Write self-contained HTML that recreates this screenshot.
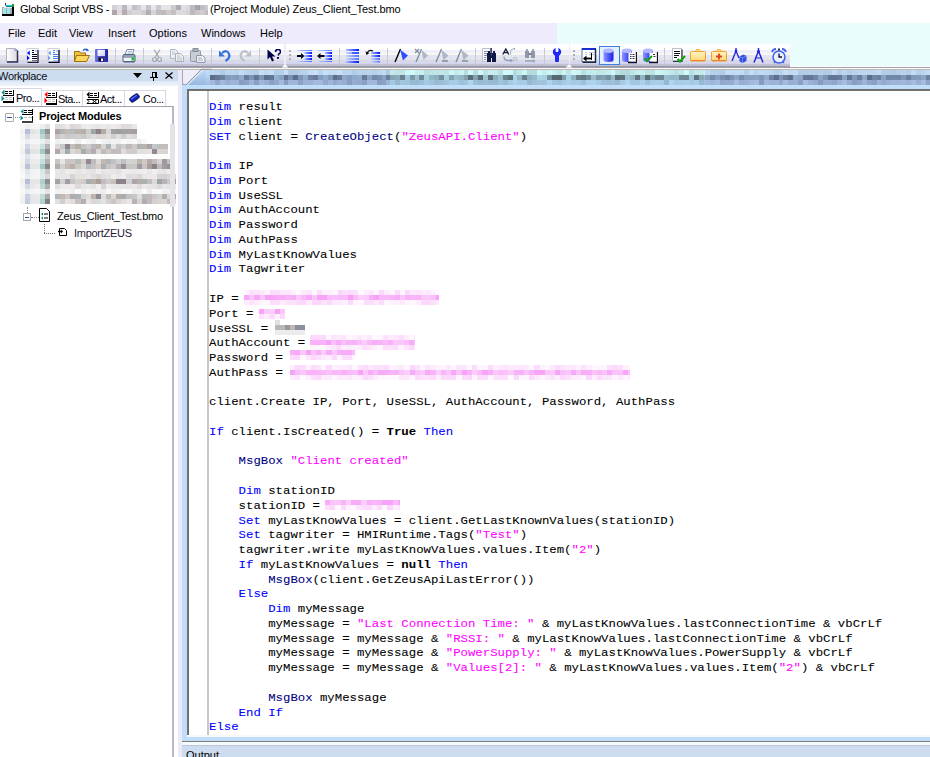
<!DOCTYPE html>
<html><head><meta charset="utf-8">
<style>
*{margin:0;padding:0;box-sizing:border-box}
html,body{width:930px;height:757px;overflow:hidden;background:#fff}
body{position:relative;font-family:"Liberation Sans",sans-serif;font-size:11px;color:#000}
.a{position:absolute}
.t{position:absolute;white-space:pre;line-height:11px;font-size:11px}
.cl{position:absolute;left:209px;white-space:pre;font-family:"Liberation Mono",monospace;font-size:12.33px;line-height:14px;color:#000;transform:scaleY(0.88);transform-origin:0 10.3px;-webkit-text-stroke:0.08px currentColor}
.k{color:#0000ff}.n{color:#000080}.s{color:#ff00ff}.b{font-weight:bold}
.sep{position:absolute;top:48px;width:1px;height:16px;background:#c8c8d4}
</style></head><body>
<!-- title bar -->
<svg class="a" style="left:2px;top:2px" width="13" height="14" shape-rendering="crispEdges"><rect x="0" y="5" width="10" height="8" fill="#b0a8a8"/><rect x="1" y="6" width="3" height="7" fill="#98e8ec"/><rect x="5" y="6" width="3" height="7" fill="#98e8ec"/><rect x="10" y="5" width="2" height="9" fill="#000"/><rect x="0" y="12" width="12" height="2" fill="#000"/><rect x="3" y="1" width="1" height="2" fill="#303030"/><rect x="3" y="3" width="8" height="1" fill="#20c8d8"/><rect x="4" y="4" width="6" height="1" fill="#108088"/><rect x="10" y="2" width="2" height="3" fill="#10a020"/><rect x="2" y="5" width="8" height="1" fill="#f0e8e8"/></svg>
<div class="t" style="left:20px;top:4px;letter-spacing:-0.3px">Global Script VBS -</div>
<svg class="a" style="left:112px;top:5px" width="96" height="14" shape-rendering="crispEdges"><rect x="0.0" y="0" width="5.4" height="5" fill="#d3d1d7"/><rect x="4.9" y="0" width="5.4" height="5" fill="#e0dee2"/><rect x="9.8" y="0" width="5.4" height="5" fill="#bab9c1"/><rect x="14.7" y="0" width="5.4" height="5" fill="#e6e4e7"/><rect x="19.6" y="0" width="5.4" height="5" fill="#c2c1c9"/><rect x="24.5" y="0" width="5.4" height="5" fill="#cfced4"/><rect x="29.4" y="0" width="5.4" height="5" fill="#e7e5e8"/><rect x="34.3" y="0" width="5.4" height="5" fill="#c5c3cb"/><rect x="39.2" y="0" width="5.4" height="5" fill="#e9e7e9"/><rect x="44.1" y="0" width="5.4" height="5" fill="#cac9cf"/><rect x="49.0" y="0" width="5.4" height="5" fill="#e6e4e7"/><rect x="53.9" y="0" width="5.4" height="5" fill="#e5e3e6"/><rect x="58.8" y="0" width="5.4" height="5" fill="#cbcad0"/><rect x="63.7" y="0" width="5.4" height="5" fill="#acabb6"/><rect x="68.6" y="0" width="5.4" height="5" fill="#e2e0e3"/><rect x="73.5" y="0" width="5.4" height="5" fill="#dad9dd"/><rect x="78.4" y="0" width="5.4" height="5" fill="#bbbac3"/><rect x="83.3" y="0" width="5.4" height="5" fill="#a3a2ae"/><rect x="88.2" y="0" width="5.4" height="5" fill="#bfbec6"/><rect x="93.1" y="0" width="5.4" height="5" fill="#cdccd2"/><rect x="0.0" y="5" width="5.4" height="5" fill="#aea5aa"/><rect x="4.9" y="5" width="5.4" height="5" fill="#dfdbdd"/><rect x="9.8" y="5" width="5.4" height="5" fill="#b4acb0"/><rect x="14.7" y="5" width="5.4" height="5" fill="#d2cdcf"/><rect x="19.6" y="5" width="5.4" height="5" fill="#dad5d8"/><rect x="24.5" y="5" width="5.4" height="5" fill="#dbd7d9"/><rect x="29.4" y="5" width="5.4" height="5" fill="#d1ccce"/><rect x="34.3" y="5" width="5.4" height="5" fill="#b6afb2"/><rect x="39.2" y="5" width="5.4" height="5" fill="#d8d3d6"/><rect x="44.1" y="5" width="5.4" height="5" fill="#c3bcbf"/><rect x="49.0" y="5" width="5.4" height="5" fill="#c0b9bc"/><rect x="53.9" y="5" width="5.4" height="5" fill="#cec8cb"/><rect x="58.8" y="5" width="5.4" height="5" fill="#c4bec1"/><rect x="63.7" y="5" width="5.4" height="5" fill="#dedadc"/><rect x="68.6" y="5" width="5.4" height="5" fill="#dedadc"/><rect x="73.5" y="5" width="5.4" height="5" fill="#d7d2d4"/><rect x="78.4" y="5" width="5.4" height="5" fill="#bdb6ba"/><rect x="83.3" y="5" width="5.4" height="5" fill="#cbc5c8"/><rect x="88.2" y="5" width="5.4" height="5" fill="#d1cbce"/><rect x="93.1" y="5" width="5.4" height="5" fill="#c2bcbf"/></svg>
<div class="t" style="left:210px;top:4px;letter-spacing:-0.07px">(Project Module) Zeus_Client_Test.bmo</div>
<!-- menu bar -->
<div class="a" style="left:0;top:23px;width:557px;height:21px;background:#eeecfc"></div>
<div class="a" style="left:557px;top:23px;width:373px;height:21px;background:#eafcfc"></div>
<div class="t" style="left:8px;top:28px">File</div>
<div class="t" style="left:38px;top:28px">Edit</div>
<div class="t" style="left:69px;top:28px">View</div>
<div class="t" style="left:108px;top:28px">Insert</div>
<div class="t" style="left:149px;top:28px">Options</div>
<div class="t" style="left:201px;top:28px">Windows</div>
<div class="t" style="left:260px;top:28px">Help</div>
<!-- toolbar row -->
<div class="a" style="left:0;top:44px;width:930px;height:22px;background:#eafcfc"></div>
<div class="a" style="left:0;top:44px;width:570px;height:22px;background:#eeecfc"></div>
<div class="a" style="left:0;top:44px;width:284px;height:22px;background:linear-gradient(#fff 0,#fff 6px,#f0f0fa 6px,#f0f0fa 9.5px,#f8f8f0 9.5px,#f8f8f0 11px,#e4e4f0 11px,#e4e4f0 14.6px,#dde4e4 14.6px,#dde4e4 16px,#d8d8e8 16px,#d8d8e8 19.3px,#d0d4f0 19.3px,#d0d4f0 20.4px,#c0c0d0 20.4px)"></div>
<div class="a" style="left:286px;top:44px;width:283px;height:22px;background:linear-gradient(#fff 0,#fff 6px,#f0f0fa 6px,#f0f0fa 9.5px,#f8f8f0 9.5px,#f8f8f0 11px,#e4e4f0 11px,#e4e4f0 14.6px,#dde4e4 14.6px,#dde4e4 16px,#d8d8e8 16px,#d8d8e8 19.3px,#d0d4f0 19.3px,#d0d4f0 20.4px,#c0c0d0 20.4px)"></div>
<div class="a" style="left:570px;top:44px;width:220px;height:22px;background:linear-gradient(#fff 0,#fff 6px,#f0f0fa 6px,#f0f0fa 9.5px,#f8f8f0 9.5px,#f8f8f0 11px,#e4e4f0 11px,#e4e4f0 14.6px,#dde4e4 14.6px,#dde4e4 16px,#d8d8e8 16px,#d8d8e8 19.3px,#d0d4f0 19.3px,#d0d4f0 20.4px,#c0c0d0 20.4px)"></div>
<div class="a" style="left:0;top:66px;width:790px;height:1px;background:#9898a8"></div>
<div class="a" style="left:790px;top:66px;width:140px;height:1px;background:#fafefe"></div>
<div class="a" style="left:0;top:67px;width:930px;height:1px;background:#a4a2a8"></div>
<div class="a" style="left:0;top:68px;width:930px;height:1px;background:#f8fafc"></div>
<div class="a" style="left:0;top:69px;width:930px;height:1px;background:#c0b8b4"></div>
<div class="sep" style="left:67px"></div>
<div class="sep" style="left:115px"></div>
<div class="sep" style="left:143px"></div>
<div class="sep" style="left:211px"></div>
<div class="sep" style="left:259px"></div>
<div class="sep" style="left:339px"></div>
<div class="sep" style="left:387px"></div>
<div class="sep" style="left:475px"></div>
<div class="sep" style="left:544px"></div>
<div class="sep" style="left:664px"></div>
<svg class="a" style="left:6px;top:48px" width="13" height="15" viewBox="0 0 13 15"><defs><linearGradient id="pg" x1="0" x2="1"><stop offset="0" stop-color="#fff"/><stop offset="1" stop-color="#d8d8e0"/></linearGradient></defs><path d="M0.5 0.5h9l2 2v11h-11z" fill="url(#pg)" stroke="#b0b0c0"/><path d="M11.5 2.5v11.5H1" stroke="#303050" stroke-width="1.5" fill="none"/><path d="M8 2h3" stroke="#5080e0" stroke-width="1"/></svg>
<svg class="a" style="left:26px;top:48px" width="13" height="15" viewBox="0 0 13 15"><rect x="1" y="0.5" width="11" height="13" fill="#fff" stroke="#d0d0d8"/><path d="M12 2v12.5H1.5" stroke="#202040" stroke-width="1.3" fill="none"/><path d="M1 5l2.8-2.5v5zM3.8 10L1 7.5v5z" fill="#0010ff"/><path d="M6 2.5h2M6 4.5h2M6 6.5h5M6 8.5h5M6 10.5h5" stroke="#000020"/><path d="M6 12.5h5" stroke="#707080"/><path d="M9 3h2" stroke="#70a0f0"/></svg>
<svg class="a" style="left:47px;top:48px" width="13" height="15" viewBox="0 0 13 15"><rect x="1" y="0.5" width="11" height="13" fill="#fffef8" stroke="#d0d0d8"/><path d="M12 2v12.5H1.5" stroke="#000020" stroke-width="1.3" fill="none"/><path d="M1 5l2.8-2.5v5zM3.8 10L1 7.5v5z" fill="#70a0ff"/><path d="M6 2.5h2M6 4.5h2M6 6.5h5M6 8.5h5M6 10.5h5" stroke="#4080f0"/><path d="M6 12.5h5" stroke="#a0c0ff"/><path d="M9 3h2" stroke="#70a0f0"/></svg>
<svg class="a" style="left:74px;top:48px" width="16" height="15" viewBox="0 0 16 15"><path d="M0.5 3.5h5l1 1.5h5v8h-11z" fill="#f0c040" stroke="#a07010"/><path d="M2.5 7.5h13l-3 6h-12z" fill="#ffd860" stroke="#a07010"/><path d="M9 2.5q2.5-2.5 5 0" stroke="#3060c0" stroke-width="1.3" fill="none"/><path d="M13 0.5l2 2.5h-3z" fill="#3060c0"/></svg>
<svg class="a" style="left:95px;top:49px" width="14" height="13" viewBox="0 0 14 13"><defs><linearGradient id="flg" x1="0" x2="1"><stop offset="0" stop-color="#7070e8"/><stop offset="1" stop-color="#2020a0"/></linearGradient><linearGradient id="flw" x1="0" y1="0" x2="1" y2="1"><stop offset="0" stop-color="#ffffff"/><stop offset="1" stop-color="#c8d0f0"/></linearGradient></defs><rect x="0" y="0" width="13" height="13" rx="0.8" fill="url(#flg)"/><rect x="2.5" y="0.8" width="7.5" height="6.2" fill="url(#flw)"/><rect x="3.5" y="8.5" width="5" height="3.8" fill="#101018"/><rect x="6" y="9.5" width="2" height="2.5" fill="#f0f0f0"/></svg>
<svg class="a" style="left:122px;top:49px" width="14" height="14" viewBox="0 0 14 14"><path d="M3 5.5L5 0.5h7l-1.5 5z" fill="#f4f8ff" stroke="#6880a0" stroke-width="0.9"/><path d="M6 2.5h4M5.5 4h4" stroke="#a0b0c8" stroke-width="0.8"/><rect x="0.5" y="5" width="13" height="8.5" rx="2" fill="#506478"/><rect x="1.5" y="8.5" width="11" height="3.5" fill="#f0f4fc"/><rect x="9.5" y="8.5" width="3" height="3" fill="#20c030"/><rect x="1.5" y="6" width="11" height="2" fill="#90a4b8"/></svg>
<svg class="a" style="left:152px;top:49px" width="10" height="13" viewBox="0 0 10 13"><path d="M2 0.5l5 8M8 0.5l-5 8" stroke="#a0a8b0" stroke-width="1.3"/><circle cx="2.5" cy="10.5" r="2" fill="none" stroke="#a0a8b0" stroke-width="1.2"/><circle cx="7.5" cy="10.5" r="2" fill="none" stroke="#a0a8b0" stroke-width="1.2"/></svg>
<svg class="a" style="left:170px;top:49px" width="14" height="13" viewBox="0 0 14 13"><path d="M0.5 0.5h5l2 2v7h-7z" fill="#eef0f4" stroke="#b0b8c0"/><path d="M5.5 4.5h5l3 3v5h-8z" fill="#eef0f4" stroke="#a8b0b8"/><path d="M7 7h3M7 9h5M7 11h5M2 3h3M2 5h3" stroke="#b8c0c8"/></svg>
<svg class="a" style="left:190px;top:48px" width="16" height="15" viewBox="0 0 16 15"><rect x="0.5" y="2.5" width="10" height="11" rx="1" fill="#c8ccd4" stroke="#9098a8"/><rect x="3" y="0.5" width="5" height="3" fill="#a8b0b8" stroke="#8890a0"/><path d="M6.5 7.5h6l2.5 2.5v4.5h-8.5z" fill="#eef0f4" stroke="#9098a8"/><path d="M8 10h4M8 12h5" stroke="#a8b0b8"/></svg>
<svg class="a" style="left:219px;top:49px" width="12" height="13" viewBox="0 0 12 13"><path d="M3 4q5-4 7 1q1.5 4-3.5 7" stroke="#3070e0" stroke-width="2.2" fill="none"/><path d="M0 1.5v6h6z" fill="#3070e0"/></svg>
<svg class="a" style="left:239px;top:49px" width="12" height="13" viewBox="0 0 12 13"><path d="M9 4q-5-4-7 1q-1.5 4 3.5 7" stroke="#b8c0c8" stroke-width="2.2" fill="none"/><path d="M12 1.5v6h-6z" fill="#b8c0c8"/></svg>
<svg class="a" style="left:267px;top:49px" width="14" height="13" viewBox="0 0 14 13"><path d="M0.5 0.5v10l2.5-2.5 2 4.5 2-1-2-4h3.5z" fill="#000048"/><path d="M8.5 3q0-2.5 2.5-2.5t2.5 2.2q0 1.5-2 2.5v1.3" stroke="#000060" stroke-width="1.6" fill="none"/><rect x="10" y="8" width="2" height="1.8" fill="#000060"/></svg>
<svg class="a" style="left:289px;top:49px" width="3" height="12" viewBox="0 0 3 12"><rect x="0" y="1" width="2" height="2" fill="#b0b0bc"/><rect x="0" y="5" width="2" height="2" fill="#b0b0bc"/><rect x="0" y="9" width="2" height="2" fill="#b0b0bc"/></svg>
<svg class="a" style="left:297px;top:48px" width="16" height="15" viewBox="0 0 16 15"><defs><linearGradient id="bl" x1="0" x2="1"><stop offset="0" stop-color="#a8c0ff"/><stop offset="1" stop-color="#0010ff"/></linearGradient><linearGradient id="bll" x1="0" x2="1"><stop offset="0" stop-color="#c8d8ff"/><stop offset="1" stop-color="#5070ff"/></linearGradient></defs><rect x="0" y="2" width="15" height="1" fill="url(#bll)"/><rect x="7.5" y="4" width="7.5" height="2" fill="url(#bl)"/><rect x="7.5" y="7" width="7.5" height="2" fill="url(#bl)"/><rect x="7.5" y="10" width="7.5" height="2" fill="url(#bl)"/><rect x="0" y="13" width="15" height="1" fill="url(#bll)"/><path d="M0 8h4.5" stroke="#000018" stroke-width="2"/><path d="M4 5l3.5 3-3.5 3z" fill="#000018"/></svg>
<svg class="a" style="left:317px;top:48px" width="16" height="15" viewBox="0 0 16 15"><defs><linearGradient id="bl2" x1="0" x2="1"><stop offset="0" stop-color="#a8c0ff"/><stop offset="1" stop-color="#0010ff"/></linearGradient><linearGradient id="bll2" x1="0" x2="1"><stop offset="0" stop-color="#c8d8ff"/><stop offset="1" stop-color="#5070ff"/></linearGradient></defs><rect x="0" y="2" width="15" height="1" fill="url(#bll2)"/><rect x="8" y="4" width="7" height="2" fill="url(#bl2)"/><rect x="8" y="7" width="7" height="2" fill="url(#bl2)"/><rect x="8" y="10" width="7" height="2" fill="url(#bl2)"/><rect x="0" y="13" width="15" height="1" fill="url(#bll2)"/><path d="M3 8h4.5" stroke="#000018" stroke-width="2"/><path d="M3.5 5L0 8l3.5 3z" fill="#000018"/></svg>
<svg class="a" style="left:346px;top:48px" width="14" height="15" viewBox="0 0 14 15"><defs><linearGradient id="bl3" x1="0" x2="1"><stop offset="0" stop-color="#a8c0ff"/><stop offset="1" stop-color="#0010ff"/></linearGradient><linearGradient id="bll3" x1="0" x2="1"><stop offset="0" stop-color="#c8d8ff"/><stop offset="1" stop-color="#5070ff"/></linearGradient></defs><rect x="0" y="1" width="13" height="2" fill="url(#bl3)"/><rect x="0" y="4" width="13" height="2" fill="url(#bll3)"/><rect x="0" y="7" width="13" height="2" fill="url(#bll3)"/><rect x="0" y="10" width="13" height="2" fill="url(#bll3)"/><rect x="0" y="13" width="13" height="2" fill="url(#bl3)"/><rect x="6" y="4" width="7" height="2" fill="#2040ff" opacity="0.6"/></svg>
<svg class="a" style="left:365px;top:48px" width="16" height="15" viewBox="0 0 16 15"><defs><linearGradient id="bl4" x1="0" x2="1"><stop offset="0" stop-color="#a8c0ff"/><stop offset="1" stop-color="#0010ff"/></linearGradient><linearGradient id="bll4" x1="0" x2="1"><stop offset="0" stop-color="#c8d8ff"/><stop offset="1" stop-color="#5070ff"/></linearGradient></defs><path d="M2 5q2-4 6-2" stroke="#000" stroke-width="1.1" fill="none"/><path d="M0.5 3.5l1 3.5 3-2z" fill="#000"/><rect x="6" y="4" width="9" height="2" fill="url(#bl4)"/><rect x="6" y="7" width="9" height="2" fill="url(#bl4)"/><rect x="6" y="10" width="9" height="2" fill="url(#bll4)"/><rect x="6" y="13" width="9" height="1.5" fill="url(#bll4)"/></svg>
<svg class="a" style="left:394px;top:48px" width="15" height="15" viewBox="0 0 15 15"><path d="M1 14L6.5 1" stroke="#000" stroke-width="1.4"/><path d="M6 1.5l8 6-5 5z" fill="#3050ff"/></svg>
<svg class="a" style="left:414px;top:48px" width="15" height="15" viewBox="0 0 15 15"><path d="M2 14L7.5 1" stroke="#8090a0" stroke-width="1.4"/><path d="M7 1.5l7 6-4.5 4.5z" fill="#b0b8c8"/><path d="M1 1l4 4M5 1L1 5" stroke="#8090a0" stroke-width="1.3"/></svg>
<svg class="a" style="left:435px;top:48px" width="15" height="15" viewBox="0 0 15 15"><path d="M1 14L6.5 1" stroke="#8090a0" stroke-width="1.4"/><path d="M6 1.5l7.5 6-5 5z" fill="#b0b8c8"/><path d="M7 13h6" stroke="#8090a0" stroke-width="1.5"/></svg>
<svg class="a" style="left:455px;top:48px" width="15" height="15" viewBox="0 0 15 15"><path d="M1 14L6.5 1" stroke="#8090a0" stroke-width="1.4"/><path d="M6 1.5l7.5 6-5 5z" fill="#b0b8c8"/><path d="M7 13h6" stroke="#8090a0" stroke-width="1.5"/></svg>
<svg class="a" style="left:482px;top:48px" width="15" height="14" viewBox="0 0 15 14"><rect x="0.5" y="0.5" width="8" height="13" fill="#f8f8fc" stroke="#c0c0c8"/><path d="M2 3.5h4M2 5.5h3M2 7.5h3M2 9.5h2M2 11.5h2" stroke="#8090a0"/><rect x="5" y="5" width="4" height="9" fill="#101848"/><rect x="10" y="5" width="4" height="9" fill="#101848"/><rect x="6" y="3" width="2" height="2" fill="#101848"/><rect x="11" y="3" width="2" height="2" fill="#101848"/><rect x="8.5" y="0" width="1.3" height="8" fill="#101848"/><rect x="9" y="8" width="1" height="2" fill="#101848"/></svg>
<svg class="a" style="left:502px;top:48px" width="16" height="15" viewBox="0 0 16 15"><path d="M0.8 6.5L3.8 1l3 5.5M1.8 4.6h4" stroke="#101838" stroke-width="1.3" fill="none"/><path d="M8.5 6.5v-3q0-2 3-2.5" stroke="#a8b8c8" stroke-width="1.1" fill="none"/><path d="M11 0h2v2z" fill="#8898b0"/><path d="M2 8.5q0 4 4 4h3" stroke="#90a0b8" stroke-width="1.4" fill="none"/><path d="M8.5 10.5l2.5 2-2.5 2z" fill="#90a0b8"/><path d="M11.5 14V9.5h2.5q1.3 0 1.3 1.2t-1.3 1.3h-2.5M13.5 12l2 2" stroke="#b8c0d0" stroke-width="0.9" fill="none"/></svg>
<svg class="a" style="left:524px;top:48px" width="12" height="15" viewBox="0 0 12 15"><rect x="1" y="3" width="4" height="7" fill="#9098a8"/><rect x="7" y="3" width="4" height="7" fill="#9098a8"/><rect x="2" y="1" width="2" height="2" fill="#a0a8b4"/><rect x="8" y="1" width="2" height="2" fill="#a0a8b4"/><rect x="4" y="5" width="4" height="2" fill="#808898"/><path d="M1 13h8" stroke="#98a4b4" stroke-width="1.5"/><path d="M9 11l2.5 2-2.5 2z" fill="#98a4b4"/></svg>
<svg class="a" style="left:552px;top:48px" width="10" height="15" viewBox="0 0 10 15"><circle cx="5" cy="4" r="4.2" fill="#2028f8"/><path d="M3.6 0h2.8v3.6q-1.4 1-2.8 0z" fill="#f4f4fc"/><rect x="3" y="6.5" width="4" height="7.5" rx="1" fill="#2028f8"/></svg>
<svg class="a" style="left:573px;top:49px" width="3" height="12" viewBox="0 0 3 12"><rect x="0" y="1" width="2" height="2" fill="#b0b0bc"/><rect x="0" y="5" width="2" height="2" fill="#b0b0bc"/><rect x="0" y="9" width="2" height="2" fill="#b0b0bc"/></svg>
<svg class="a" style="left:581px;top:48px" width="16" height="15" viewBox="0 0 16 15"><rect x="1" y="0.5" width="13.5" height="13" fill="#fff" stroke="#6878a0"/><rect x="1" y="0" width="14" height="2" fill="#1830d0"/><path d="M14.5 1v13.5H1.5" stroke="#202840" stroke-width="1.5" fill="none"/><path d="M4 4.5h2M4 6.5h2M8 4.5h5M8 6.5h5" stroke="#c0c8d8"/><path d="M3 10.5h7" stroke="#000" stroke-width="1.8"/><path d="M5.5 7.5L2 10.5l3.5 3z" fill="#000"/><path d="M10.5 5v7" stroke="#000" stroke-width="1"/></svg>
<div class="a" style="left:599px;top:46px;width:21px;height:19px;border:1.5px solid #3c80e0;background:#e4eefc"></div>
<svg class="a" style="left:603px;top:48px" width="12" height="16" viewBox="0 0 12 16"><defs><linearGradient id="dbg1" x1="0" x2="1"><stop offset="0" stop-color="#9098ff"/><stop offset="0.5" stop-color="#5058f8"/><stop offset="1" stop-color="#1820e8"/></linearGradient></defs><path d="M0.5 2.8v9a5 2.2 0 0 0 10 0v-9z" fill="url(#dbg1)"/><ellipse cx="5.5" cy="2.8" rx="5" ry="2.2" fill="#b0b8ff"/></svg>
<svg class="a" style="left:621px;top:48px" width="16" height="16" viewBox="0 0 16 16"><defs><linearGradient id="dbg2" x1="0" x2="1"><stop offset="0" stop-color="#9098ff"/><stop offset="0.5" stop-color="#5058f8"/><stop offset="1" stop-color="#1820e8"/></linearGradient></defs><path d="M1.0 2.8v9a5 2.2 0 0 0 10 0v-9z" fill="url(#dbg2)"/><ellipse cx="6.0" cy="2.8" rx="5" ry="2.2" fill="#b0b8ff"/><rect x="7.5" y="4.5" width="7.5" height="9" fill="#fff"/><path d="M15.5 4v10.5H7" stroke="#101020" stroke-width="1.3" fill="none"/><path d="M9 6.5h1.5M11.5 6.5h2M9 8.5h1.5M11.5 8.5h2M9 10.5h1.5M11.5 10.5h2" stroke="#303040"/></svg>
<svg class="a" style="left:642px;top:48px" width="16" height="16" viewBox="0 0 16 16"><defs><linearGradient id="dbg3" x1="0" x2="1"><stop offset="0" stop-color="#9098ff"/><stop offset="0.5" stop-color="#5058f8"/><stop offset="1" stop-color="#1820e8"/></linearGradient></defs><path d="M1.0 2.8v9a5 2.2 0 0 0 10 0v-9z" fill="url(#dbg3)"/><ellipse cx="6.0" cy="2.8" rx="5" ry="2.2" fill="#b0b8ff"/><rect x="7.5" y="4.5" width="7.5" height="9" fill="#fff"/><path d="M15.5 4v10.5H7" stroke="#101020" stroke-width="1.3" fill="none"/><path d="M11 6.5h2M11.5 8.5h2" stroke="#303040"/><path d="M2.5 10.5l2.5 2.5 5-5" stroke="#18a018" stroke-width="2" fill="none"/></svg>
<svg class="a" style="left:672px;top:48px" width="14" height="15" viewBox="0 0 14 15"><rect x="0.5" y="0.5" width="9" height="12" fill="#fff" stroke="#c0c0c8"/><path d="M10 1.5v12H1" stroke="#303048" stroke-width="1.2" fill="none"/><path d="M2 3.5h6M2 5.5h6M2 7.5h5M2 9.5h3" stroke="#101020"/><path d="M5.5 11l2.5 2.5 5-5.5" stroke="#18a018" stroke-width="2.2" fill="none"/></svg>
<svg class="a" style="left:690px;top:48px" width="16" height="15" viewBox="0 0 16 15"><defs><linearGradient id="fg1" x1="0" y1="0" x2="0" y2="1"><stop offset="0" stop-color="#fff4c0"/><stop offset="1" stop-color="#ffd878"/></linearGradient></defs><path d="M5.5 3.5l1-2h3l1 2" fill="#ffe8a0" stroke="#f0b040"/><rect x="0.5" y="3.5" width="15" height="9.5" rx="1" fill="url(#fg1)" stroke="#f0a030"/><path d="M1 12.5h14" stroke="#f08030" stroke-width="1"/></svg>
<svg class="a" style="left:711px;top:48px" width="16" height="15" viewBox="0 0 16 15"><defs><linearGradient id="fg2" x1="0" y1="0" x2="0" y2="1"><stop offset="0" stop-color="#fff4c0"/><stop offset="1" stop-color="#ffd878"/></linearGradient></defs><path d="M5.5 3.5l1-2h3l1 2" fill="#ffe8a0" stroke="#f0b040"/><rect x="0.5" y="3.5" width="15" height="9.5" rx="1" fill="url(#fg2)" stroke="#f0a030"/><path d="M1 12.5h14" stroke="#f08030" stroke-width="1"/><path d="M8 5.5v6M5 8.5h6" stroke="#e04020" stroke-width="1.8"/></svg>
<svg class="a" style="left:731px;top:48px" width="16" height="16" viewBox="0 0 16 16"><path d="M5 0v3M1 13L5 3 8 10" stroke="#2020e0" stroke-width="1.3" fill="none"/><circle cx="5" cy="3" r="1.3" fill="#2020e0"/><path d="M8.5 8.5l4-2 3 1.5v5l-4 2-3-1.5z" fill="#3050e0"/><path d="M8.5 8.5l3 1.5 4-2M11.5 10v5" stroke="#8090ff" stroke-width="0.8" fill="none"/></svg>
<svg class="a" style="left:753px;top:48px" width="11" height="16" viewBox="0 0 11 16"><path d="M5.5 0v3M1 14.5L5.5 3 10 14.5" stroke="#2020e0" stroke-width="1.4" fill="none"/><circle cx="5.5" cy="3.5" r="1.4" fill="#2020e0"/><path d="M2.5 10h6" stroke="#2020e0" stroke-width="1"/></svg>
<svg class="a" style="left:771px;top:48px" width="16" height="16" viewBox="0 0 16 16"><circle cx="8" cy="9" r="6" fill="#e8f0ff" stroke="#4060f0" stroke-width="1.5"/><path d="M8 5.5V9h3" stroke="#101030" stroke-width="1.3" fill="none"/><path d="M1 4q1-3 4-3M15 4q-1-3-4-3" stroke="#4060f0" stroke-width="1.8" fill="none"/><path d="M3 15l1.5-2M13 15l-1.5-2" stroke="#4060f0" stroke-width="1.4"/><rect x="7" y="0.5" width="2" height="2" fill="#303050"/></svg>
<svg class="a" style="left:281px;top:64px" width="8" height="4"><path d="M0.5 3.5L4 0.5 7.5 3.5z" fill="#fff"/></svg>
<svg class="a" style="left:565px;top:64px" width="8" height="4"><path d="M0.5 3.5L4 0.5 7.5 3.5z" fill="#fff"/></svg>
<!-- left panel -->
<div class="a" style="left:0;top:70px;width:178px;height:11px;background:#cddcee"></div>
<div class="a" style="left:0;top:81px;width:178px;height:5px;background:linear-gradient(#dce8f4,#eef4fa)"></div>
<div class="t" style="left:-2px;top:71px;letter-spacing:-0.3px;color:#101020">Workplace</div>
<svg class="a" style="left:133px;top:73px" width="9" height="6"><path d="M0 0h9L4.5 5z" fill="#000"/></svg>
<svg class="a" style="left:150px;top:72px" width="8" height="9" shape-rendering="crispEdges"><rect x="2" y="0" width="4" height="1" fill="#000"/><rect x="2" y="0" width="1" height="5" fill="#000"/><rect x="5" y="0" width="2" height="5" fill="#000"/><rect x="0" y="5" width="8" height="1" fill="#000"/><rect x="3" y="6" width="1" height="3" fill="#000"/></svg>
<svg class="a" style="left:165px;top:72px" width="8" height="7"><path d="M0.5 0.5l7 6M7.5 0.5l-7 6" stroke="#000" stroke-width="1.25"/></svg>
<div class="a" style="left:178px;top:70px;width:4px;height:687px;background:#eceaf8"></div>
<!-- tabs -->
<div class="a" style="left:0;top:86px;width:178px;height:20px;background:#fff"></div>
<div class="a" style="left:0;top:88px;width:42px;height:18px;background:#fff;border:1px solid #d8d8e0;border-left:none;border-bottom:none"></div>
<div class="a" style="left:42px;top:90px;width:41px;height:16px;border:1px solid #d8d8e0;border-left:none;border-bottom:none"></div>
<div class="a" style="left:83px;top:90px;width:42px;height:16px;border:1px solid #d8d8e0;border-left:none;border-bottom:none"></div>
<div class="a" style="left:125px;top:90px;width:41px;height:16px;border:1px solid #d8d8e0;border-left:none;border-bottom:none"></div>
<svg class="a" style="left:1px;top:89px" width="14" height="14" shape-rendering="crispEdges"><rect x="4" y="2" width="3" height="1" fill="#000"/><rect x="8" y="2" width="3" height="1" fill="#000"/><rect x="4" y="4" width="3" height="1" fill="#000"/><rect x="8" y="4" width="3" height="1" fill="#000"/><rect x="12" y="1" width="1" height="6" fill="#000"/><rect x="2" y="6" width="11" height="1" fill="#000"/><path d="M0.5 3.5L3.5 0.5V6.5z" fill="#109090" shape-rendering="auto"/><rect x="4" y="8" width="3" height="1" fill="#c8c8c8"/><rect x="8" y="8" width="3" height="1" fill="#c8c8c8"/><rect x="4" y="10" width="3" height="1" fill="#c8c8c8"/><rect x="8" y="10" width="3" height="1" fill="#c8c8c8"/><rect x="12" y="8" width="1" height="5" fill="#000"/><rect x="2" y="12" width="11" height="1.5" fill="#000"/><path d="M3.5 9.5L0.5 6.5V12.5z" fill="#109090" shape-rendering="auto"/></svg>
<div class="t" style="left:16px;top:93px;letter-spacing:-0.55px;color:#000010">Pro...</div>
<svg class="a" style="left:44px;top:91px" width="14" height="14" shape-rendering="crispEdges"><rect x="4" y="2" width="3" height="1" fill="#000"/><rect x="8" y="2" width="3" height="1" fill="#000"/><rect x="4" y="4" width="3" height="1" fill="#000"/><rect x="8" y="4" width="3" height="1" fill="#000"/><rect x="12" y="1" width="1" height="6" fill="#000"/><rect x="2" y="6" width="11" height="1" fill="#000"/><path d="M0.5 3.5L3.5 0.5V6.5z" fill="#ff0000" shape-rendering="auto"/><rect x="4" y="8" width="3" height="1" fill="#c8c8c8"/><rect x="8" y="8" width="3" height="1" fill="#c8c8c8"/><rect x="4" y="10" width="3" height="1" fill="#c8c8c8"/><rect x="8" y="10" width="3" height="1" fill="#c8c8c8"/><rect x="12" y="8" width="1" height="5" fill="#000"/><rect x="2" y="12" width="11" height="1.5" fill="#000"/><path d="M3.5 9.5L0.5 6.5V12.5z" fill="#ff0000" shape-rendering="auto"/></svg>
<div class="t" style="left:58px;top:94px;letter-spacing:-0.55px;color:#000010">Sta...</div>
<svg class="a" style="left:86px;top:91px" width="14" height="14" shape-rendering="crispEdges"><rect x="4" y="2" width="3" height="1" fill="#000"/><rect x="8" y="2" width="3" height="1" fill="#000"/><rect x="4" y="4" width="3" height="1" fill="#000"/><rect x="8" y="4" width="3" height="1" fill="#000"/><rect x="12" y="1" width="1" height="6" fill="#000"/><rect x="2" y="6" width="11" height="1" fill="#000"/><path d="M0.5 3.5L3.5 0.5V6.5z" fill="#000" shape-rendering="auto"/><path d="M1 8.5h11.5v4H1l2-2z" fill="#fff" stroke="#000" shape-rendering="auto"/><path d="M6 8.5l5 4M11 8.5l-5 4" stroke="#000" shape-rendering="auto"/></svg>
<div class="t" style="left:100px;top:94px;letter-spacing:-0.55px;color:#000010">Act...</div>
<svg class="a" style="left:129px;top:93px" width="11" height="10"><g transform="rotate(-35 5.5 5)"><rect x="0.5" y="2.5" width="10" height="5" rx="2" fill="#1028c8" stroke="#000040" stroke-width="0.9"/><path d="M2 4h7" stroke="#90a0ff" stroke-width="0.8"/></g></svg>
<div class="t" style="left:143px;top:94px;letter-spacing:-0.55px;color:#000010">Co...</div>
<!-- tree panel -->
<div class="a" style="left:0;top:106px;width:174px;height:651px;border-top:1px solid #a0a0b0;border-right:2px solid #b8b8c8"></div>
<div class="a" style="left:5px;top:113px;width:9px;height:9px;border:1px solid #a8a8a8;border-radius:1px;background:#fff"></div>
<div class="a" style="left:7px;top:117px;width:5px;height:1px;background:#3050a0"></div>
<div class="a" style="left:15px;top:117px;width:5px;height:0;border-top:1px dotted #808080"></div>
<svg class="a" style="left:20px;top:109px" width="14" height="14" shape-rendering="crispEdges"><rect x="4" y="1" width="3" height="1" fill="#000"/><rect x="8" y="1" width="4" height="1" fill="#000"/><rect x="4" y="3" width="3" height="1" fill="#000"/><rect x="8" y="3" width="4" height="1" fill="#000"/><rect x="12" y="0" width="1" height="6" fill="#000"/><rect x="2" y="5" width="11" height="1" fill="#000"/><path d="M0.5 2.5L3.5 0V5z" fill="#109090" shape-rendering="auto"/><rect x="4" y="8" width="3" height="1" fill="#c0c0c0"/><rect x="8" y="8" width="4" height="1" fill="#c0c0c0"/><rect x="12" y="7" width="1" height="6" fill="#000"/><rect x="2" y="12" width="11" height="1.5" fill="#404040"/><path d="M3.5 9L0.5 6.5V11.5z" fill="#109090" shape-rendering="auto"/></svg>
<div class="t" style="left:39px;top:111px;font-weight:bold;letter-spacing:-0.17px">Project Modules</div>
<svg class="a" style="left:20px;top:124px" width="156" height="84" shape-rendering="crispEdges"><rect x="0" y="0" width="5" height="5" fill="#f8f8f8"/><rect x="5" y="0" width="5" height="5" fill="#eceef3"/><rect x="10" y="0" width="5" height="5" fill="#f5f5f5"/><rect x="15" y="0" width="5" height="5" fill="#f5f5f5"/><rect x="20" y="0" width="5" height="5" fill="#e9f0f0"/><rect x="25" y="0" width="5" height="5" fill="#e0e0e0"/><rect x="35.0" y="0" width="5.5" height="5" fill="#dfdcdd"/><rect x="40.1" y="0" width="5.5" height="5" fill="#e4e0df"/><rect x="45.2" y="0" width="5.5" height="5" fill="#ece9e8"/><rect x="50.3" y="0" width="5.5" height="5" fill="#d9d5d8"/><rect x="55.4" y="0" width="5.5" height="5" fill="#e0dcde"/><rect x="60.5" y="0" width="5.5" height="5" fill="#ece9e8"/><rect x="65.6" y="0" width="5.5" height="5" fill="#efecec"/><rect x="70.7" y="0" width="5.5" height="5" fill="#eae9e9"/><rect x="75.8" y="0" width="5.5" height="5" fill="#e8e5e6"/><rect x="80.9" y="0" width="5.5" height="5" fill="#ebe8e9"/><rect x="86.0" y="0" width="5.5" height="5" fill="#e9e7e5"/><rect x="91.1" y="0" width="5.5" height="5" fill="#eeebea"/><rect x="96.2" y="0" width="5.5" height="5" fill="#e9e7e7"/><rect x="101.3" y="0" width="5.5" height="5" fill="#e0dbd9"/><rect x="106.4" y="0" width="5.5" height="5" fill="#e1dcdb"/><rect x="111.5" y="0" width="5.5" height="5" fill="#e7e7e7"/><rect x="0" y="5" width="5" height="5" fill="#f2f2f2"/><rect x="5" y="5" width="5" height="5" fill="#b6bfd8"/><rect x="10" y="5" width="5" height="5" fill="#e3e3e6"/><rect x="15" y="5" width="5" height="5" fill="#e8e8e8"/><rect x="20" y="5" width="5" height="5" fill="#a0c8c8"/><rect x="25" y="5" width="5" height="5" fill="#929292"/><rect x="35.0" y="5" width="5.5" height="5" fill="#aca4ab"/><rect x="40.1" y="5" width="5.5" height="5" fill="#afb4b4"/><rect x="45.2" y="5" width="5.5" height="5" fill="#c3bab6"/><rect x="50.3" y="5" width="5.5" height="5" fill="#b8bcbc"/><rect x="55.4" y="5" width="5.5" height="5" fill="#b8b3ab"/><rect x="60.5" y="5" width="5.5" height="5" fill="#b6b0a8"/><rect x="65.6" y="5" width="5.5" height="5" fill="#cbcdcd"/><rect x="70.7" y="5" width="5.5" height="5" fill="#9ea5a5"/><rect x="75.8" y="5" width="5.5" height="5" fill="#8c828c"/><rect x="80.9" y="5" width="5.5" height="5" fill="#b4aaa4"/><rect x="86.0" y="5" width="5.5" height="5" fill="#dad7d7"/><rect x="91.1" y="5" width="5.5" height="5" fill="#9ea5a5"/><rect x="96.2" y="5" width="5.5" height="5" fill="#a09b9e"/><rect x="101.3" y="5" width="5.5" height="5" fill="#9ea5a5"/><rect x="106.4" y="5" width="5.5" height="5" fill="#a6a2a4"/><rect x="111.5" y="5" width="5.5" height="5" fill="#a59da5"/><rect x="0" y="10" width="5" height="5" fill="#f3f3f3"/><rect x="5" y="10" width="5" height="5" fill="#d5dae7"/><rect x="10" y="10" width="5" height="5" fill="#ececee"/><rect x="15" y="10" width="5" height="5" fill="#ededed"/><rect x="20" y="10" width="5" height="5" fill="#bbd7d7"/><rect x="25" y="10" width="5" height="5" fill="#b1b1b1"/><rect x="35.0" y="10" width="5.5" height="5" fill="#ccc4c1"/><rect x="40.1" y="10" width="5.5" height="5" fill="#d3cfd2"/><rect x="45.2" y="10" width="5.5" height="5" fill="#c7c9c9"/><rect x="50.3" y="10" width="5.5" height="5" fill="#cbcdcd"/><rect x="55.4" y="10" width="5.5" height="5" fill="#d2ced0"/><rect x="60.5" y="10" width="5.5" height="5" fill="#c8caca"/><rect x="65.6" y="10" width="5.5" height="5" fill="#d7d4d5"/><rect x="70.7" y="10" width="5.5" height="5" fill="#dedcdc"/><rect x="75.8" y="10" width="5.5" height="5" fill="#dad6d3"/><rect x="80.9" y="10" width="5.5" height="5" fill="#ddd8d6"/><rect x="86.0" y="10" width="5.5" height="5" fill="#e3e0e0"/><rect x="91.1" y="10" width="5.5" height="5" fill="#ced0d0"/><rect x="96.2" y="10" width="5.5" height="5" fill="#dfdfdf"/><rect x="101.3" y="10" width="5.5" height="5" fill="#d0cdce"/><rect x="106.4" y="10" width="5.5" height="5" fill="#e0dddd"/><rect x="111.5" y="10" width="5.5" height="5" fill="#dbd7d9"/><rect x="0" y="15" width="5" height="5" fill="#f8f8f8"/><rect x="5" y="15" width="5" height="5" fill="#eceef3"/><rect x="10" y="15" width="5" height="5" fill="#f5f5f6"/><rect x="15" y="15" width="5" height="5" fill="#f6f6f6"/><rect x="20" y="15" width="5" height="5" fill="#ebf1f1"/><rect x="25" y="15" width="5" height="5" fill="#e2e2e2"/><rect x="35.0" y="15" width="5.5" height="5" fill="#efeff1"/><rect x="40.1" y="15" width="5.5" height="5" fill="#f5f5f6"/><rect x="45.2" y="15" width="5.5" height="5" fill="#f5f5f6"/><rect x="50.3" y="15" width="5.5" height="5" fill="#fbfbfb"/><rect x="55.4" y="15" width="5.5" height="5" fill="#eeeef0"/><rect x="60.5" y="15" width="5.5" height="5" fill="#fbfbfb"/><rect x="65.6" y="15" width="5.5" height="5" fill="#f4f4f5"/><rect x="70.7" y="15" width="5.5" height="5" fill="#efeff1"/><rect x="75.8" y="15" width="5.5" height="5" fill="#fafafa"/><rect x="80.9" y="15" width="5.5" height="5" fill="#f1f1f2"/><rect x="86.0" y="15" width="5.5" height="5" fill="#ededef"/><rect x="91.1" y="15" width="5.5" height="5" fill="#f2f2f3"/><rect x="96.2" y="15" width="5.5" height="5" fill="#f0f0f1"/><rect x="101.3" y="15" width="5.5" height="5" fill="#fafafa"/><rect x="106.4" y="15" width="5.5" height="5" fill="#f5f5f6"/><rect x="111.5" y="15" width="5.5" height="5" fill="#f9f9fa"/><rect x="116.6" y="15" width="5.5" height="5" fill="#efeff1"/><rect x="121.7" y="15" width="5.5" height="5" fill="#f7f7f8"/><rect x="0" y="20" width="5" height="5" fill="#f4f4f4"/><rect x="5" y="20" width="5" height="5" fill="#d0d6e5"/><rect x="10" y="20" width="5" height="5" fill="#ebebed"/><rect x="15" y="20" width="5" height="5" fill="#ececec"/><rect x="20" y="20" width="5" height="5" fill="#cbe0e0"/><rect x="25" y="20" width="5" height="5" fill="#b5b5b5"/><rect x="35.0" y="20" width="5.5" height="5" fill="#dbd8d8"/><rect x="40.1" y="20" width="5.5" height="5" fill="#c6c9c9"/><rect x="45.2" y="20" width="5.5" height="5" fill="#8e848e"/><rect x="50.3" y="20" width="5.5" height="5" fill="#c2bec0"/><rect x="55.4" y="20" width="5.5" height="5" fill="#b6b0a8"/><rect x="60.5" y="20" width="5.5" height="5" fill="#c8c4c4"/><rect x="65.6" y="20" width="5.5" height="5" fill="#cdcfcf"/><rect x="70.7" y="20" width="5.5" height="5" fill="#bdb7bc"/><rect x="75.8" y="20" width="5.5" height="5" fill="#b9b3ab"/><rect x="80.9" y="20" width="5.5" height="5" fill="#d4d5d5"/><rect x="86.0" y="20" width="5.5" height="5" fill="#adb2b2"/><rect x="91.1" y="20" width="5.5" height="5" fill="#e5e2e2"/><rect x="96.2" y="20" width="5.5" height="5" fill="#c1c4c4"/><rect x="101.3" y="20" width="5.5" height="5" fill="#d0cdcd"/><rect x="106.4" y="20" width="5.5" height="5" fill="#beb8bd"/><rect x="111.5" y="20" width="5.5" height="5" fill="#cfcbcb"/><rect x="116.6" y="20" width="5.5" height="5" fill="#afb5b5"/><rect x="121.7" y="20" width="5.5" height="5" fill="#b9b4ac"/><rect x="126.8" y="20" width="5.5" height="5" fill="#a9a1a8"/><rect x="131.9" y="20" width="5.5" height="5" fill="#c4c7c7"/><rect x="137.0" y="20" width="5.5" height="5" fill="#bbbfbf"/><rect x="142.1" y="20" width="5.5" height="5" fill="#c3bdb7"/><rect x="0" y="25" width="5" height="5" fill="#f0f0f0"/><rect x="5" y="25" width="5" height="5" fill="#bfc7dc"/><rect x="10" y="25" width="5" height="5" fill="#e3e3e5"/><rect x="15" y="25" width="5" height="5" fill="#e5e5e5"/><rect x="20" y="25" width="5" height="5" fill="#a3caca"/><rect x="25" y="25" width="5" height="5" fill="#8d8d8d"/><rect x="35.0" y="25" width="5.5" height="5" fill="#b4a9a4"/><rect x="40.1" y="25" width="5.5" height="5" fill="#dad7d7"/><rect x="45.2" y="25" width="5.5" height="5" fill="#a4abab"/><rect x="50.3" y="25" width="5.5" height="5" fill="#dcd8d5"/><rect x="55.4" y="25" width="5.5" height="5" fill="#d4cecb"/><rect x="60.5" y="25" width="5.5" height="5" fill="#a5acac"/><rect x="65.6" y="25" width="5.5" height="5" fill="#c2bcc1"/><rect x="70.7" y="25" width="5.5" height="5" fill="#b3afb1"/><rect x="75.8" y="25" width="5.5" height="5" fill="#dbd8d8"/><rect x="80.9" y="25" width="5.5" height="5" fill="#c2bcb6"/><rect x="86.0" y="25" width="5.5" height="5" fill="#ccc8c3"/><rect x="91.1" y="25" width="5.5" height="5" fill="#c0babf"/><rect x="96.2" y="25" width="5.5" height="5" fill="#c2bdb6"/><rect x="101.3" y="25" width="5.5" height="5" fill="#dfdcdc"/><rect x="106.4" y="25" width="5.5" height="5" fill="#d0cdce"/><rect x="111.5" y="25" width="5.5" height="5" fill="#d0cbc6"/><rect x="116.6" y="25" width="5.5" height="5" fill="#e2dfdf"/><rect x="121.7" y="25" width="5.5" height="5" fill="#e2dfdf"/><rect x="126.8" y="25" width="5.5" height="5" fill="#e6e3e3"/><rect x="131.9" y="25" width="5.5" height="5" fill="#928992"/><rect x="137.0" y="25" width="5.5" height="5" fill="#dbd6d4"/><rect x="142.1" y="25" width="5.5" height="5" fill="#d9d3d1"/><rect x="0" y="30" width="5" height="5" fill="#f6f6f6"/><rect x="5" y="30" width="5" height="5" fill="#e1e5ed"/><rect x="10" y="30" width="5" height="5" fill="#f1f1f2"/><rect x="15" y="30" width="5" height="5" fill="#f2f2f2"/><rect x="20" y="30" width="5" height="5" fill="#dbe9e9"/><rect x="25" y="30" width="5" height="5" fill="#cacaca"/><rect x="35.0" y="30" width="5.5" height="5" fill="#fcfcfc"/><rect x="40.1" y="30" width="5.5" height="5" fill="#fcfcfc"/><rect x="45.2" y="30" width="5.5" height="5" fill="#fcfcfc"/><rect x="50.3" y="30" width="5.5" height="5" fill="#fcfcfc"/><rect x="55.4" y="30" width="5.5" height="5" fill="#fcfcfc"/><rect x="60.5" y="30" width="5.5" height="5" fill="#fcfcfc"/><rect x="65.6" y="30" width="5.5" height="5" fill="#fcfcfc"/><rect x="70.7" y="30" width="5.5" height="5" fill="#fcfcfc"/><rect x="75.8" y="30" width="5.5" height="5" fill="#fcfcfc"/><rect x="80.9" y="30" width="5.5" height="5" fill="#fcfcfc"/><rect x="86.0" y="30" width="5.5" height="5" fill="#fcfcfc"/><rect x="91.1" y="30" width="5.5" height="5" fill="#fcfcfc"/><rect x="96.2" y="30" width="5.5" height="5" fill="#fcfcfc"/><rect x="101.3" y="30" width="5.5" height="5" fill="#fcfcfc"/><rect x="106.4" y="30" width="5.5" height="5" fill="#fcfcfc"/><rect x="111.5" y="30" width="5.5" height="5" fill="#fcfcfc"/><rect x="116.6" y="30" width="5.5" height="5" fill="#fcfcfc"/><rect x="121.7" y="30" width="5.5" height="5" fill="#fcfcfc"/><rect x="126.8" y="30" width="5.5" height="5" fill="#fcfcfc"/><rect x="131.9" y="30" width="5.5" height="5" fill="#fcfcfc"/><rect x="137.0" y="30" width="5.5" height="5" fill="#fcfcfc"/><rect x="142.1" y="30" width="5.5" height="5" fill="#fcfcfc"/><rect x="0" y="35" width="5" height="5" fill="#f3f3f3"/><rect x="5" y="35" width="5" height="5" fill="#d3d8e6"/><rect x="10" y="35" width="5" height="5" fill="#ebebec"/><rect x="15" y="35" width="5" height="5" fill="#ececec"/><rect x="20" y="35" width="5" height="5" fill="#c7dede"/><rect x="25" y="35" width="5" height="5" fill="#b2b2b2"/><rect x="35.0" y="35" width="5.5" height="5" fill="#c8c4c6"/><rect x="40.1" y="35" width="5.5" height="5" fill="#e7e4e4"/><rect x="45.2" y="35" width="5.5" height="5" fill="#c9c5c7"/><rect x="50.3" y="35" width="5.5" height="5" fill="#ccc7c2"/><rect x="55.4" y="35" width="5.5" height="5" fill="#b7bbbb"/><rect x="60.5" y="35" width="5.5" height="5" fill="#d2ceca"/><rect x="65.6" y="35" width="5.5" height="5" fill="#928992"/><rect x="70.7" y="35" width="5.5" height="5" fill="#c1bbc0"/><rect x="75.8" y="35" width="5.5" height="5" fill="#dcd9d9"/><rect x="80.9" y="35" width="5.5" height="5" fill="#c1b8b4"/><rect x="86.0" y="35" width="5.5" height="5" fill="#b0b6b6"/><rect x="91.1" y="35" width="5.5" height="5" fill="#bec2c2"/><rect x="96.2" y="35" width="5.5" height="5" fill="#d4cfd2"/><rect x="101.3" y="35" width="5.5" height="5" fill="#bfc2c2"/><rect x="106.4" y="35" width="5.5" height="5" fill="#d2d4d4"/><rect x="111.5" y="35" width="5.5" height="5" fill="#d4d1d2"/><rect x="116.6" y="35" width="5.5" height="5" fill="#bab5ad"/><rect x="121.7" y="35" width="5.5" height="5" fill="#d0c9c6"/><rect x="126.8" y="35" width="5.5" height="5" fill="#b6aba6"/><rect x="131.9" y="35" width="5.5" height="5" fill="#c0bdbe"/><rect x="137.0" y="35" width="5.5" height="5" fill="#d6d2cf"/><rect x="142.1" y="35" width="5.5" height="5" fill="#a0979f"/><rect x="147.2" y="35" width="5.5" height="5" fill="#c6beba"/><rect x="0" y="40" width="5" height="5" fill="#f0f0f0"/><rect x="5" y="40" width="5" height="5" fill="#b8c2d9"/><rect x="10" y="40" width="5" height="5" fill="#e5e5e7"/><rect x="15" y="40" width="5" height="5" fill="#e6e6e6"/><rect x="20" y="40" width="5" height="5" fill="#a0c8c8"/><rect x="25" y="40" width="5" height="5" fill="#878787"/><rect x="35.0" y="40" width="5.5" height="5" fill="#b6b0a8"/><rect x="40.1" y="40" width="5.5" height="5" fill="#d2cfd0"/><rect x="45.2" y="40" width="5.5" height="5" fill="#c4bcb8"/><rect x="50.3" y="40" width="5.5" height="5" fill="#b6b0a8"/><rect x="55.4" y="40" width="5.5" height="5" fill="#ccc8c2"/><rect x="60.5" y="40" width="5.5" height="5" fill="#dbd7d4"/><rect x="65.6" y="40" width="5.5" height="5" fill="#b8bcbc"/><rect x="70.7" y="40" width="5.5" height="5" fill="#c8c4c4"/><rect x="75.8" y="40" width="5.5" height="5" fill="#d5cfcc"/><rect x="80.9" y="40" width="5.5" height="5" fill="#aab0b0"/><rect x="86.0" y="40" width="5.5" height="5" fill="#c8c4c4"/><rect x="91.1" y="40" width="5.5" height="5" fill="#cecbcb"/><rect x="96.2" y="40" width="5.5" height="5" fill="#b4b0b2"/><rect x="101.3" y="40" width="5.5" height="5" fill="#978e97"/><rect x="106.4" y="40" width="5.5" height="5" fill="#c8c4c4"/><rect x="111.5" y="40" width="5.5" height="5" fill="#cac6c6"/><rect x="116.6" y="40" width="5.5" height="5" fill="#a199a1"/><rect x="121.7" y="40" width="5.5" height="5" fill="#c8c4c4"/><rect x="126.8" y="40" width="5.5" height="5" fill="#aa9e98"/><rect x="131.9" y="40" width="5.5" height="5" fill="#8c828c"/><rect x="137.0" y="40" width="5.5" height="5" fill="#bebabc"/><rect x="142.1" y="40" width="5.5" height="5" fill="#a19d9f"/><rect x="147.2" y="40" width="5.5" height="5" fill="#988f98"/><rect x="0" y="45" width="5" height="5" fill="#f6f6f6"/><rect x="5" y="45" width="5" height="5" fill="#e1e5ed"/><rect x="10" y="45" width="5" height="5" fill="#f1f1f2"/><rect x="15" y="45" width="5" height="5" fill="#f3f3f3"/><rect x="20" y="45" width="5" height="5" fill="#d8e7e7"/><rect x="25" y="45" width="5" height="5" fill="#c7c7c7"/><rect x="35.0" y="45" width="5.5" height="5" fill="#e9e8e8"/><rect x="40.1" y="45" width="5.5" height="5" fill="#e6e3e4"/><rect x="45.2" y="45" width="5.5" height="5" fill="#efeced"/><rect x="50.3" y="45" width="5.5" height="5" fill="#edeaea"/><rect x="55.4" y="45" width="5.5" height="5" fill="#e7e4e5"/><rect x="60.5" y="45" width="5.5" height="5" fill="#eceaea"/><rect x="65.6" y="45" width="5.5" height="5" fill="#e7e6e6"/><rect x="70.7" y="45" width="5.5" height="5" fill="#e4e2e2"/><rect x="75.8" y="45" width="5.5" height="5" fill="#efeded"/><rect x="80.9" y="45" width="5.5" height="5" fill="#e6e4e4"/><rect x="86.0" y="45" width="5.5" height="5" fill="#eae7e6"/><rect x="91.1" y="45" width="5.5" height="5" fill="#e8e5e6"/><rect x="96.2" y="45" width="5.5" height="5" fill="#e6e2e1"/><rect x="101.3" y="45" width="5.5" height="5" fill="#eceaea"/><rect x="106.4" y="45" width="5.5" height="5" fill="#eeebeb"/><rect x="111.5" y="45" width="5.5" height="5" fill="#ece9e8"/><rect x="116.6" y="45" width="5.5" height="5" fill="#efedec"/><rect x="121.7" y="45" width="5.5" height="5" fill="#f0eded"/><rect x="126.8" y="45" width="5.5" height="5" fill="#e8e6e6"/><rect x="131.9" y="45" width="5.5" height="5" fill="#f1efef"/><rect x="137.0" y="45" width="5.5" height="5" fill="#e9e7e7"/><rect x="142.1" y="45" width="5.5" height="5" fill="#e7e5e5"/><rect x="147.2" y="45" width="5.5" height="5" fill="#f0eded"/><rect x="0" y="50" width="5" height="5" fill="#f7f7f7"/><rect x="5" y="50" width="5" height="5" fill="#e8ebf1"/><rect x="10" y="50" width="5" height="5" fill="#f3f3f4"/><rect x="15" y="50" width="5" height="5" fill="#f4f4f4"/><rect x="20" y="50" width="5" height="5" fill="#dfebeb"/><rect x="25" y="50" width="5" height="5" fill="#d9d9d9"/><rect x="35.0" y="50" width="5.5" height="5" fill="#e7e5e5"/><rect x="40.1" y="50" width="5.5" height="5" fill="#e7e6e6"/><rect x="45.2" y="50" width="5.5" height="5" fill="#e7e5e5"/><rect x="50.3" y="50" width="5.5" height="5" fill="#d5d7d7"/><rect x="55.4" y="50" width="5.5" height="5" fill="#e4e1df"/><rect x="60.5" y="50" width="5.5" height="5" fill="#e6e2e1"/><rect x="65.6" y="50" width="5.5" height="5" fill="#e9e6e5"/><rect x="70.7" y="50" width="5.5" height="5" fill="#dedfdf"/><rect x="75.8" y="50" width="5.5" height="5" fill="#dcd6d4"/><rect x="80.9" y="50" width="5.5" height="5" fill="#e0e0e0"/><rect x="86.0" y="50" width="5.5" height="5" fill="#e3e0e1"/><rect x="91.1" y="50" width="5.5" height="5" fill="#efeded"/><rect x="96.2" y="50" width="5.5" height="5" fill="#e8e7e7"/><rect x="101.3" y="50" width="5.5" height="5" fill="#efecec"/><rect x="106.4" y="50" width="5.5" height="5" fill="#dfdcdd"/><rect x="111.5" y="50" width="5.5" height="5" fill="#e1dee0"/><rect x="116.6" y="50" width="5.5" height="5" fill="#dbd7d9"/><rect x="121.7" y="50" width="5.5" height="5" fill="#e8e7e7"/><rect x="126.8" y="50" width="5.5" height="5" fill="#eceae9"/><rect x="131.9" y="50" width="5.5" height="5" fill="#ebe8e8"/><rect x="137.0" y="50" width="5.5" height="5" fill="#d9d3d1"/><rect x="142.1" y="50" width="5.5" height="5" fill="#d5d1d4"/><rect x="147.2" y="50" width="5.5" height="5" fill="#ddd8d6"/><rect x="152.3" y="50" width="5.5" height="5" fill="#d5d2d3"/><rect x="0" y="55" width="5" height="5" fill="#f0f0f0"/><rect x="5" y="55" width="5" height="5" fill="#b7c0d8"/><rect x="10" y="55" width="5" height="5" fill="#e6e6e8"/><rect x="15" y="55" width="5" height="5" fill="#e6e6e6"/><rect x="20" y="55" width="5" height="5" fill="#aed0d0"/><rect x="25" y="55" width="5" height="5" fill="#909090"/><rect x="35.0" y="55" width="5.5" height="5" fill="#9ea5a5"/><rect x="40.1" y="55" width="5.5" height="5" fill="#d3d0d0"/><rect x="45.2" y="55" width="5.5" height="5" fill="#a49ca4"/><rect x="50.3" y="55" width="5.5" height="5" fill="#c8c4c4"/><rect x="55.4" y="55" width="5.5" height="5" fill="#d5d2d2"/><rect x="60.5" y="55" width="5.5" height="5" fill="#d0cccc"/><rect x="65.6" y="55" width="5.5" height="5" fill="#a7adad"/><rect x="70.7" y="55" width="5.5" height="5" fill="#b6b0a8"/><rect x="75.8" y="55" width="5.5" height="5" fill="#aa9e98"/><rect x="80.9" y="55" width="5.5" height="5" fill="#c2bdc1"/><rect x="86.0" y="55" width="5.5" height="5" fill="#cecbcc"/><rect x="91.1" y="55" width="5.5" height="5" fill="#c8c0bc"/><rect x="96.2" y="55" width="5.5" height="5" fill="#8c828c"/><rect x="101.3" y="55" width="5.5" height="5" fill="#8c828c"/><rect x="106.4" y="55" width="5.5" height="5" fill="#d0d2d2"/><rect x="111.5" y="55" width="5.5" height="5" fill="#aca4ab"/><rect x="116.6" y="55" width="5.5" height="5" fill="#b6b0a8"/><rect x="121.7" y="55" width="5.5" height="5" fill="#abb1b1"/><rect x="126.8" y="55" width="5.5" height="5" fill="#c2bec0"/><rect x="131.9" y="55" width="5.5" height="5" fill="#dbd8d8"/><rect x="137.0" y="55" width="5.5" height="5" fill="#9ea5a5"/><rect x="142.1" y="55" width="5.5" height="5" fill="#bab3b9"/><rect x="147.2" y="55" width="5.5" height="5" fill="#c7caca"/><rect x="152.3" y="55" width="5.5" height="5" fill="#aa9e98"/><rect x="0" y="60" width="5" height="5" fill="#f3f3f3"/><rect x="5" y="60" width="5" height="5" fill="#d4dae7"/><rect x="10" y="60" width="5" height="5" fill="#e8e8ea"/><rect x="15" y="60" width="5" height="5" fill="#ededed"/><rect x="20" y="60" width="5" height="5" fill="#bed9d9"/><rect x="25" y="60" width="5" height="5" fill="#aeaeae"/><rect x="35.0" y="60" width="5.5" height="5" fill="#e1dfdf"/><rect x="40.1" y="60" width="5.5" height="5" fill="#eceaea"/><rect x="45.2" y="60" width="5.5" height="5" fill="#ece9e8"/><rect x="50.3" y="60" width="5.5" height="5" fill="#eeebeb"/><rect x="55.4" y="60" width="5.5" height="5" fill="#ddd9dc"/><rect x="60.5" y="60" width="5.5" height="5" fill="#e8e5e5"/><rect x="65.6" y="60" width="5.5" height="5" fill="#eae7e8"/><rect x="70.7" y="60" width="5.5" height="5" fill="#e3e1e1"/><rect x="75.8" y="60" width="5.5" height="5" fill="#f0eeee"/><rect x="80.9" y="60" width="5.5" height="5" fill="#d8d4d7"/><rect x="86.0" y="60" width="5.5" height="5" fill="#edebeb"/><rect x="91.1" y="60" width="5.5" height="5" fill="#eae9e9"/><rect x="96.2" y="60" width="5.5" height="5" fill="#e8e7e7"/><rect x="101.3" y="60" width="5.5" height="5" fill="#e8e5e5"/><rect x="106.4" y="60" width="5.5" height="5" fill="#e8e5e6"/><rect x="111.5" y="60" width="5.5" height="5" fill="#ebe8e7"/><rect x="116.6" y="60" width="5.5" height="5" fill="#e0dbda"/><rect x="121.7" y="60" width="5.5" height="5" fill="#ebe9e9"/><rect x="126.8" y="60" width="5.5" height="5" fill="#e8e5e5"/><rect x="131.9" y="60" width="5.5" height="5" fill="#e5e3e3"/><rect x="137.0" y="60" width="5.5" height="5" fill="#dbd7da"/><rect x="142.1" y="60" width="5.5" height="5" fill="#e8e5e6"/><rect x="147.2" y="60" width="5.5" height="5" fill="#e4e1e2"/><rect x="152.3" y="60" width="5.5" height="5" fill="#e8e5e3"/><rect x="0" y="65" width="5" height="5" fill="#f8f8f8"/><rect x="5" y="65" width="5" height="5" fill="#eceef3"/><rect x="10" y="65" width="5" height="5" fill="#f5f5f6"/><rect x="15" y="65" width="5" height="5" fill="#f5f5f5"/><rect x="20" y="65" width="5" height="5" fill="#ecf2f2"/><rect x="25" y="65" width="5" height="5" fill="#e3e3e3"/><rect x="35.0" y="65" width="5.5" height="5" fill="#f1f1f3"/><rect x="40.1" y="65" width="5.5" height="5" fill="#f2f2f3"/><rect x="45.2" y="65" width="5.5" height="5" fill="#f4f4f5"/><rect x="50.3" y="65" width="5.5" height="5" fill="#f0f0f1"/><rect x="55.4" y="65" width="5.5" height="5" fill="#fbfbfb"/><rect x="60.5" y="65" width="5.5" height="5" fill="#efeff1"/><rect x="65.6" y="65" width="5.5" height="5" fill="#f5f5f6"/><rect x="70.7" y="65" width="5.5" height="5" fill="#f2f2f3"/><rect x="75.8" y="65" width="5.5" height="5" fill="#efeff0"/><rect x="80.9" y="65" width="5.5" height="5" fill="#ededef"/><rect x="86.0" y="65" width="5.5" height="5" fill="#f9f9f9"/><rect x="91.1" y="65" width="5.5" height="5" fill="#f1f1f3"/><rect x="96.2" y="65" width="5.5" height="5" fill="#f2f2f3"/><rect x="101.3" y="65" width="5.5" height="5" fill="#f9f9f9"/><rect x="106.4" y="65" width="5.5" height="5" fill="#f8f8f9"/><rect x="111.5" y="65" width="5.5" height="5" fill="#eeeef0"/><rect x="116.6" y="65" width="5.5" height="5" fill="#f0f0f1"/><rect x="121.7" y="65" width="5.5" height="5" fill="#fafafa"/><rect x="126.8" y="65" width="5.5" height="5" fill="#ededef"/><rect x="131.9" y="65" width="5.5" height="5" fill="#f9f9f9"/><rect x="137.0" y="65" width="5.5" height="5" fill="#fafafb"/><rect x="142.1" y="65" width="5.5" height="5" fill="#f1f1f2"/><rect x="147.2" y="65" width="5.5" height="5" fill="#f2f2f4"/><rect x="152.3" y="65" width="5.5" height="5" fill="#f5f5f6"/><rect x="0" y="70" width="5" height="5" fill="#f3f3f3"/><rect x="5" y="70" width="5" height="5" fill="#cad0e2"/><rect x="10" y="70" width="5" height="5" fill="#e7e7e9"/><rect x="15" y="70" width="5" height="5" fill="#eaeaea"/><rect x="20" y="70" width="5" height="5" fill="#c1dada"/><rect x="25" y="70" width="5" height="5" fill="#ababab"/><rect x="35.0" y="70" width="5.5" height="5" fill="#b3b8b8"/><rect x="40.1" y="70" width="5.5" height="5" fill="#c3bab6"/><rect x="45.2" y="70" width="5.5" height="5" fill="#cfc8c5"/><rect x="50.3" y="70" width="5.5" height="5" fill="#b0abae"/><rect x="55.4" y="70" width="5.5" height="5" fill="#acb2b2"/><rect x="60.5" y="70" width="5.5" height="5" fill="#d3d4d4"/><rect x="65.6" y="70" width="5.5" height="5" fill="#dedbd8"/><rect x="70.7" y="70" width="5.5" height="5" fill="#bcb2ae"/><rect x="75.8" y="70" width="5.5" height="5" fill="#938a93"/><rect x="80.9" y="70" width="5.5" height="5" fill="#e0dddd"/><rect x="86.0" y="70" width="5.5" height="5" fill="#c0bcbe"/><rect x="91.1" y="70" width="5.5" height="5" fill="#dcd6d4"/><rect x="96.2" y="70" width="5.5" height="5" fill="#b7ada8"/><rect x="101.3" y="70" width="5.5" height="5" fill="#a8aeae"/><rect x="106.4" y="70" width="5.5" height="5" fill="#c4c0c2"/><rect x="111.5" y="70" width="5.5" height="5" fill="#c5c8c8"/><rect x="116.6" y="70" width="5.5" height="5" fill="#e2dedc"/><rect x="121.7" y="70" width="5.5" height="5" fill="#b5baba"/><rect x="126.8" y="70" width="5.5" height="5" fill="#c2b9b5"/><rect x="131.9" y="70" width="5.5" height="5" fill="#cbc6ca"/><rect x="137.0" y="70" width="5.5" height="5" fill="#d4d0d0"/><rect x="142.1" y="70" width="5.5" height="5" fill="#b3aeb1"/><rect x="147.2" y="70" width="5.5" height="5" fill="#dad7d7"/><rect x="152.3" y="70" width="5.5" height="5" fill="#aeaaac"/><rect x="0" y="75" width="5" height="5" fill="#f1f1f1"/><rect x="5" y="75" width="5" height="5" fill="#c3cbde"/><rect x="10" y="75" width="5" height="5" fill="#e6e6e9"/><rect x="15" y="75" width="5" height="5" fill="#e8e8e8"/><rect x="20" y="75" width="5" height="5" fill="#b0d1d1"/><rect x="25" y="75" width="5" height="5" fill="#828282"/><rect x="35.0" y="75" width="5.5" height="5" fill="#e1e1e1"/><rect x="40.1" y="75" width="5.5" height="5" fill="#d1cdc9"/><rect x="45.2" y="75" width="5.5" height="5" fill="#e6e4e2"/><rect x="50.3" y="75" width="5.5" height="5" fill="#e1dedf"/><rect x="55.4" y="75" width="5.5" height="5" fill="#c9c1bd"/><rect x="60.5" y="75" width="5.5" height="5" fill="#b5afb5"/><rect x="65.6" y="75" width="5.5" height="5" fill="#e7e4e2"/><rect x="70.7" y="75" width="5.5" height="5" fill="#dbd7d4"/><rect x="75.8" y="75" width="5.5" height="5" fill="#dadbdb"/><rect x="80.9" y="75" width="5.5" height="5" fill="#e2e2e2"/><rect x="86.0" y="75" width="5.5" height="5" fill="#d6d2ce"/><rect x="91.1" y="75" width="5.5" height="5" fill="#ccc5c1"/><rect x="96.2" y="75" width="5.5" height="5" fill="#d8d5d6"/><rect x="101.3" y="75" width="5.5" height="5" fill="#e2dfdd"/><rect x="106.4" y="75" width="5.5" height="5" fill="#e8e6e6"/><rect x="111.5" y="75" width="5.5" height="5" fill="#b8b2b8"/><rect x="116.6" y="75" width="5.5" height="5" fill="#d6d3d4"/><rect x="121.7" y="75" width="5.5" height="5" fill="#b3acb2"/><rect x="126.8" y="75" width="5.5" height="5" fill="#c2bcc1"/><rect x="131.9" y="75" width="5.5" height="5" fill="#d6d0cd"/><rect x="137.0" y="75" width="5.5" height="5" fill="#d8d5d5"/><rect x="142.1" y="75" width="5.5" height="5" fill="#dad6d3"/><rect x="147.2" y="75" width="5.5" height="5" fill="#c2bcc1"/><rect x="152.3" y="75" width="5.5" height="5" fill="#dedbdc"/></svg><div class="a" style="left:170px;top:124px;width:5px;height:83px;background:#e4e4e8"></div>
<div class="a" style="left:27px;top:207px;width:0;height:6px;border-left:1px dotted #909090"></div>
<div class="a" style="left:23px;top:213px;width:8px;height:8px;border:1px solid #a8a8a8;background:#fff"></div>
<div class="a" style="left:25px;top:217px;width:4px;height:1px;background:#3050a0"></div>
<div class="a" style="left:31px;top:217px;width:8px;height:0;border-top:1px dotted #808080"></div>
<svg class="a" style="left:39px;top:208px" width="12" height="14"><path d="M0.5 0.5h7l3 3v10h-10z" fill="#fff" stroke="#000"/><path d="M2 6l2-1.5v3zM2 10l2 1.5v-3z" fill="#008080"/><path d="M5 6h4M5 10h4" stroke="#000"/></svg>
<div class="t" style="left:57px;top:211px;letter-spacing:-0.17px">Zeus_Client_Test.bmo</div>
<div class="a" style="left:44px;top:224px;width:0;height:9px;border-left:1px dotted #707070"></div>
<div class="a" style="left:44px;top:233px;width:11px;height:0;border-top:1px dotted #707070"></div>
<svg class="a" style="left:58px;top:228px" width="9" height="8"><path d="M1.5 0.5h5l2 2v5h-7z" fill="#fff" stroke="#000"/><path d="M0 3.5h4" stroke="#000" stroke-width="1.4"/><path d="M3 1.5l2 2-2 2z" fill="#000"/></svg>
<div class="t" style="left:74px;top:228px;letter-spacing:-0.27px;color:#281838">ImportZEUS</div>
<!-- editor -->
<div class="a" style="left:182px;top:70px;width:20px;height:15px;background:#eef0fa"></div>
<svg class="a" style="left:182px;top:68px" width="30" height="18"><g transform="translate(0,0)"><defs><linearGradient id="tbg" x1="0" y1="0" x2="0" y2="1"><stop offset="0" stop-color="#c0dcf8"/><stop offset="1" stop-color="#98b8e0"/></linearGradient></defs><rect x="0" y="2" width="30" height="15" fill="#eeeefa"/><path d="M4.5 17L20 1.5H30V17z" fill="url(#tbg)"/><path d="M5.5 17L21 1.5H30" stroke="#ffffff" stroke-width="1" fill="none"/><path d="M4 16.8L19.6 1.3H30" stroke="#8a8890" stroke-width="1" fill="none"/><rect x="0" y="2" width="1" height="15" fill="#a8a8b4"/><rect x="0" y="16" width="5" height="1" fill="#a0a0ac"/></g></svg>
<div class="a" style="left:206px;top:70px;width:4px;height:15px;background:linear-gradient(#c4e0fa,#a0c0e4)"></div>
<svg class="a" style="left:210px;top:70px" width="180" height="15" shape-rendering="crispEdges"><rect x="0.0" y="0" width="5.4" height="5" fill="#bdd6ef"/><rect x="4.9" y="0" width="5.4" height="5" fill="#bad3ec"/><rect x="9.8" y="0" width="5.4" height="5" fill="#b1cae5"/><rect x="14.7" y="0" width="5.4" height="5" fill="#bcd5ee"/><rect x="19.6" y="0" width="5.4" height="5" fill="#bbd4ed"/><rect x="24.5" y="0" width="5.4" height="5" fill="#b9d2ec"/><rect x="29.4" y="0" width="5.4" height="5" fill="#c3dcf4"/><rect x="34.3" y="0" width="5.4" height="5" fill="#bbd4ed"/><rect x="39.2" y="0" width="5.4" height="5" fill="#b8d1eb"/><rect x="44.1" y="0" width="5.4" height="5" fill="#b4cde8"/><rect x="49.0" y="0" width="5.4" height="5" fill="#c5def6"/><rect x="53.9" y="0" width="5.4" height="5" fill="#c0d9f1"/><rect x="58.8" y="0" width="5.4" height="5" fill="#c5def6"/><rect x="63.7" y="0" width="5.4" height="5" fill="#b4cde7"/><rect x="68.6" y="0" width="5.4" height="5" fill="#b7d0ea"/><rect x="73.5" y="0" width="5.4" height="5" fill="#c6dff7"/><rect x="78.4" y="0" width="5.4" height="5" fill="#b0c9e4"/><rect x="83.3" y="0" width="5.4" height="5" fill="#b0c9e4"/><rect x="88.2" y="0" width="5.4" height="5" fill="#b8d1eb"/><rect x="93.1" y="0" width="5.4" height="5" fill="#b9d2eb"/><rect x="98.0" y="0" width="5.4" height="5" fill="#c4ddf4"/><rect x="102.9" y="0" width="5.4" height="5" fill="#c7e0f7"/><rect x="107.8" y="0" width="5.4" height="5" fill="#bbd4ed"/><rect x="112.7" y="0" width="5.4" height="5" fill="#c6dff6"/><rect x="117.6" y="0" width="5.4" height="5" fill="#c3dcf4"/><rect x="122.5" y="0" width="5.4" height="5" fill="#c2dbf3"/><rect x="127.4" y="0" width="5.4" height="5" fill="#c7e0f7"/><rect x="132.3" y="0" width="5.4" height="5" fill="#bcd5ee"/><rect x="137.2" y="0" width="5.4" height="5" fill="#bdd6ef"/><rect x="142.1" y="0" width="5.4" height="5" fill="#b3cce7"/><rect x="147.0" y="0" width="5.4" height="5" fill="#bbd4ed"/><rect x="151.9" y="0" width="5.4" height="5" fill="#b8d1eb"/><rect x="156.8" y="0" width="5.4" height="5" fill="#bcd5ee"/><rect x="161.7" y="0" width="5.4" height="5" fill="#b8d1ea"/><rect x="166.6" y="0" width="5.4" height="5" fill="#bdd6ee"/><rect x="171.5" y="0" width="5.4" height="5" fill="#c1daf2"/><rect x="176.4" y="0" width="5.4" height="5" fill="#b0c9e4"/><rect x="0.0" y="5" width="5.4" height="5" fill="#5c6c8b"/><rect x="4.9" y="5" width="5.4" height="5" fill="#647796"/><rect x="9.8" y="5" width="5.4" height="5" fill="#6c80a0"/><rect x="14.7" y="5" width="5.4" height="5" fill="#829bbc"/><rect x="19.6" y="5" width="5.4" height="5" fill="#87a0c2"/><rect x="24.5" y="5" width="5.4" height="5" fill="#839cbe"/><rect x="29.4" y="5" width="5.4" height="5" fill="#90abcd"/><rect x="34.3" y="5" width="5.4" height="5" fill="#697c9b"/><rect x="39.2" y="5" width="5.4" height="5" fill="#7d95b6"/><rect x="44.1" y="5" width="5.4" height="5" fill="#647696"/><rect x="49.0" y="5" width="5.4" height="5" fill="#7e96b7"/><rect x="53.9" y="5" width="5.4" height="5" fill="#5e6f8e"/><rect x="58.8" y="5" width="5.4" height="5" fill="#647695"/><rect x="63.7" y="5" width="5.4" height="5" fill="#93b0d2"/><rect x="68.6" y="5" width="5.4" height="5" fill="#88a2c3"/><rect x="73.5" y="5" width="5.4" height="5" fill="#617291"/><rect x="78.4" y="5" width="5.4" height="5" fill="#7990b1"/><rect x="83.3" y="5" width="5.4" height="5" fill="#5d6d8c"/><rect x="88.2" y="5" width="5.4" height="5" fill="#7d95b6"/><rect x="93.1" y="5" width="5.4" height="5" fill="#8fabcd"/><rect x="98.0" y="5" width="5.4" height="5" fill="#7085a5"/><rect x="102.9" y="5" width="5.4" height="5" fill="#687b9a"/><rect x="107.8" y="5" width="5.4" height="5" fill="#849ebf"/><rect x="112.7" y="5" width="5.4" height="5" fill="#8faacc"/><rect x="117.6" y="5" width="5.4" height="5" fill="#8199bb"/><rect x="122.5" y="5" width="5.4" height="5" fill="#5e6e8d"/><rect x="127.4" y="5" width="5.4" height="5" fill="#697c9c"/><rect x="132.3" y="5" width="5.4" height="5" fill="#8da8ca"/><rect x="137.2" y="5" width="5.4" height="5" fill="#869fc1"/><rect x="142.1" y="5" width="5.4" height="5" fill="#8ea9cb"/><rect x="147.0" y="5" width="5.4" height="5" fill="#90acce"/><rect x="151.9" y="5" width="5.4" height="5" fill="#677a99"/><rect x="156.8" y="5" width="5.4" height="5" fill="#8aa4c6"/><rect x="161.7" y="5" width="5.4" height="5" fill="#748aaa"/><rect x="166.6" y="5" width="5.4" height="5" fill="#7a92b2"/><rect x="171.5" y="5" width="5.4" height="5" fill="#89a3c5"/><rect x="176.4" y="5" width="5.4" height="5" fill="#6b7e9e"/><rect x="0.0" y="10" width="5.4" height="5" fill="#a1b9dc"/><rect x="4.9" y="10" width="5.4" height="5" fill="#91a8cb"/><rect x="9.8" y="10" width="5.4" height="5" fill="#a1badd"/><rect x="14.7" y="10" width="5.4" height="5" fill="#98afd2"/><rect x="19.6" y="10" width="5.4" height="5" fill="#9eb6d9"/><rect x="24.5" y="10" width="5.4" height="5" fill="#9cb4d7"/><rect x="29.4" y="10" width="5.4" height="5" fill="#879dc0"/><rect x="34.3" y="10" width="5.4" height="5" fill="#8ca2c5"/><rect x="39.2" y="10" width="5.4" height="5" fill="#9bb3d6"/><rect x="44.1" y="10" width="5.4" height="5" fill="#8aa0c3"/><rect x="49.0" y="10" width="5.4" height="5" fill="#9eb6d9"/><rect x="53.9" y="10" width="5.4" height="5" fill="#99b0d3"/><rect x="58.8" y="10" width="5.4" height="5" fill="#8ba1c4"/><rect x="63.7" y="10" width="5.4" height="5" fill="#91a8cb"/><rect x="68.6" y="10" width="5.4" height="5" fill="#a1badd"/><rect x="73.5" y="10" width="5.4" height="5" fill="#879cbf"/><rect x="78.4" y="10" width="5.4" height="5" fill="#9eb6d9"/><rect x="83.3" y="10" width="5.4" height="5" fill="#9db5d8"/><rect x="88.2" y="10" width="5.4" height="5" fill="#8da3c6"/><rect x="93.1" y="10" width="5.4" height="5" fill="#9bb2d5"/><rect x="98.0" y="10" width="5.4" height="5" fill="#9cb3d6"/><rect x="102.9" y="10" width="5.4" height="5" fill="#a2bbde"/><rect x="107.8" y="10" width="5.4" height="5" fill="#a2badd"/><rect x="112.7" y="10" width="5.4" height="5" fill="#93aacd"/><rect x="117.6" y="10" width="5.4" height="5" fill="#9db5d8"/><rect x="122.5" y="10" width="5.4" height="5" fill="#92a9cc"/><rect x="127.4" y="10" width="5.4" height="5" fill="#99b1d4"/><rect x="132.3" y="10" width="5.4" height="5" fill="#97aed1"/><rect x="137.2" y="10" width="5.4" height="5" fill="#889dc0"/><rect x="142.1" y="10" width="5.4" height="5" fill="#96add0"/><rect x="147.0" y="10" width="5.4" height="5" fill="#93aacd"/><rect x="151.9" y="10" width="5.4" height="5" fill="#8ba0c3"/><rect x="156.8" y="10" width="5.4" height="5" fill="#9fb7da"/><rect x="161.7" y="10" width="5.4" height="5" fill="#a0b8db"/><rect x="166.6" y="10" width="5.4" height="5" fill="#899fc2"/><rect x="171.5" y="10" width="5.4" height="5" fill="#8ca2c5"/><rect x="176.4" y="10" width="5.4" height="5" fill="#9db5d8"/></svg>
<svg class="a" style="left:390px;top:70px" width="315" height="15" shape-rendering="crispEdges"><rect x="0.0" y="0" width="5.4" height="5" fill="#c3eaeb"/><rect x="4.9" y="0" width="5.4" height="5" fill="#bee4e6"/><rect x="9.8" y="0" width="5.4" height="5" fill="#bee4e6"/><rect x="14.7" y="0" width="5.4" height="5" fill="#cdf5f5"/><rect x="19.6" y="0" width="5.4" height="5" fill="#d1f9f9"/><rect x="24.5" y="0" width="5.4" height="5" fill="#c6edee"/><rect x="29.4" y="0" width="5.4" height="5" fill="#c9f0f1"/><rect x="34.3" y="0" width="5.4" height="5" fill="#b9dfe1"/><rect x="39.2" y="0" width="5.4" height="5" fill="#bde3e5"/><rect x="44.1" y="0" width="5.4" height="5" fill="#bfe6e7"/><rect x="49.0" y="0" width="5.4" height="5" fill="#c1e7e9"/><rect x="53.9" y="0" width="5.4" height="5" fill="#bee4e6"/><rect x="58.8" y="0" width="5.4" height="5" fill="#cdf5f5"/><rect x="63.7" y="0" width="5.4" height="5" fill="#c4ebec"/><rect x="68.6" y="0" width="5.4" height="5" fill="#cdf4f5"/><rect x="73.5" y="0" width="5.4" height="5" fill="#b6dcde"/><rect x="78.4" y="0" width="5.4" height="5" fill="#d0f8f8"/><rect x="83.3" y="0" width="5.4" height="5" fill="#b9dee1"/><rect x="88.2" y="0" width="5.4" height="5" fill="#cff7f7"/><rect x="93.1" y="0" width="5.4" height="5" fill="#bde3e5"/><rect x="98.0" y="0" width="5.4" height="5" fill="#c7eeef"/><rect x="102.9" y="0" width="5.4" height="5" fill="#c5eced"/><rect x="107.8" y="0" width="5.4" height="5" fill="#b8dee0"/><rect x="112.7" y="0" width="5.4" height="5" fill="#d1f9f9"/><rect x="117.6" y="0" width="5.4" height="5" fill="#d0f7f8"/><rect x="122.5" y="0" width="5.4" height="5" fill="#b6dbde"/><rect x="127.4" y="0" width="5.4" height="5" fill="#c2e9ea"/><rect x="132.3" y="0" width="5.4" height="5" fill="#cff6f7"/><rect x="137.2" y="0" width="5.4" height="5" fill="#b4d9dc"/><rect x="142.1" y="0" width="5.4" height="5" fill="#b5dadd"/><rect x="147.0" y="0" width="5.4" height="5" fill="#cef6f6"/><rect x="151.9" y="0" width="5.4" height="5" fill="#c5eced"/><rect x="156.8" y="0" width="5.4" height="5" fill="#cdf5f5"/><rect x="161.7" y="0" width="5.4" height="5" fill="#c8eff0"/><rect x="166.6" y="0" width="5.4" height="5" fill="#bfe5e7"/><rect x="171.5" y="0" width="5.4" height="5" fill="#cdf4f5"/><rect x="176.4" y="0" width="5.4" height="5" fill="#bde3e5"/><rect x="181.3" y="0" width="5.4" height="5" fill="#d0f8f8"/><rect x="186.2" y="0" width="5.4" height="5" fill="#ccf4f4"/><rect x="191.1" y="0" width="5.4" height="5" fill="#b9dfe1"/><rect x="196.0" y="0" width="5.4" height="5" fill="#c5eced"/><rect x="200.9" y="0" width="5.4" height="5" fill="#c5eced"/><rect x="205.8" y="0" width="5.4" height="5" fill="#c0e6e8"/><rect x="210.7" y="0" width="5.4" height="5" fill="#c3eaeb"/><rect x="215.6" y="0" width="5.4" height="5" fill="#c6edee"/><rect x="220.5" y="0" width="5.4" height="5" fill="#d1f8f9"/><rect x="225.4" y="0" width="5.4" height="5" fill="#bce2e4"/><rect x="230.3" y="0" width="5.4" height="5" fill="#b4dadc"/><rect x="235.2" y="0" width="5.4" height="5" fill="#b4d9dc"/><rect x="240.1" y="0" width="5.4" height="5" fill="#bee4e6"/><rect x="245.0" y="0" width="5.4" height="5" fill="#c7eeef"/><rect x="249.9" y="0" width="5.4" height="5" fill="#c7eeef"/><rect x="254.8" y="0" width="5.4" height="5" fill="#bde3e5"/><rect x="259.7" y="0" width="5.4" height="5" fill="#bde3e5"/><rect x="264.6" y="0" width="5.4" height="5" fill="#cef6f6"/><rect x="269.5" y="0" width="5.4" height="5" fill="#caf2f2"/><rect x="274.4" y="0" width="5.4" height="5" fill="#c7eeef"/><rect x="279.3" y="0" width="5.4" height="5" fill="#c2e9ea"/><rect x="284.2" y="0" width="5.4" height="5" fill="#b9dfe1"/><rect x="289.1" y="0" width="5.4" height="5" fill="#c2e9ea"/><rect x="294.0" y="0" width="5.4" height="5" fill="#d1f9f9"/><rect x="298.9" y="0" width="5.4" height="5" fill="#b9dee1"/><rect x="303.8" y="0" width="5.4" height="5" fill="#c5ebed"/><rect x="308.7" y="0" width="5.4" height="5" fill="#c2e8ea"/><rect x="313.6" y="0" width="5.4" height="5" fill="#cbf2f3"/><rect x="0.0" y="5" width="5.4" height="5" fill="#85a6b6"/><rect x="4.9" y="5" width="5.4" height="5" fill="#89abba"/><rect x="9.8" y="5" width="5.4" height="5" fill="#68818d"/><rect x="14.7" y="5" width="5.4" height="5" fill="#a1c9db"/><rect x="19.6" y="5" width="5.4" height="5" fill="#7b99a7"/><rect x="24.5" y="5" width="5.4" height="5" fill="#9bc1d3"/><rect x="29.4" y="5" width="5.4" height="5" fill="#6f8996"/><rect x="34.3" y="5" width="5.4" height="5" fill="#a7d1e3"/><rect x="39.2" y="5" width="5.4" height="5" fill="#92b7c7"/><rect x="44.1" y="5" width="5.4" height="5" fill="#8dafbf"/><rect x="49.0" y="5" width="5.4" height="5" fill="#74909d"/><rect x="53.9" y="5" width="5.4" height="5" fill="#a6cfe1"/><rect x="58.8" y="5" width="5.4" height="5" fill="#83a3b2"/><rect x="63.7" y="5" width="5.4" height="5" fill="#98becf"/><rect x="68.6" y="5" width="5.4" height="5" fill="#92b6c7"/><rect x="73.5" y="5" width="5.4" height="5" fill="#81a1b0"/><rect x="78.4" y="5" width="5.4" height="5" fill="#586d77"/><rect x="83.3" y="5" width="5.4" height="5" fill="#81a1af"/><rect x="88.2" y="5" width="5.4" height="5" fill="#586d78"/><rect x="93.1" y="5" width="5.4" height="5" fill="#9cc2d4"/><rect x="98.0" y="5" width="5.4" height="5" fill="#5b717b"/><rect x="102.9" y="5" width="5.4" height="5" fill="#8badbd"/><rect x="107.8" y="5" width="5.4" height="5" fill="#9ac0d1"/><rect x="112.7" y="5" width="5.4" height="5" fill="#6a8490"/><rect x="117.6" y="5" width="5.4" height="5" fill="#5c727d"/><rect x="122.5" y="5" width="5.4" height="5" fill="#a9d4e7"/><rect x="127.4" y="5" width="5.4" height="5" fill="#93b8c8"/><rect x="132.3" y="5" width="5.4" height="5" fill="#68818d"/><rect x="137.2" y="5" width="5.4" height="5" fill="#8db0c0"/><rect x="142.1" y="5" width="5.4" height="5" fill="#95bacb"/><rect x="147.0" y="5" width="5.4" height="5" fill="#a9d4e6"/><rect x="151.9" y="5" width="5.4" height="5" fill="#a7d0e3"/><rect x="156.8" y="5" width="5.4" height="5" fill="#75929f"/><rect x="161.7" y="5" width="5.4" height="5" fill="#566a74"/><rect x="166.6" y="5" width="5.4" height="5" fill="#556973"/><rect x="171.5" y="5" width="5.4" height="5" fill="#7f9ead"/><rect x="176.4" y="5" width="5.4" height="5" fill="#a8d2e5"/><rect x="181.3" y="5" width="5.4" height="5" fill="#8eb2c2"/><rect x="186.2" y="5" width="5.4" height="5" fill="#677f8b"/><rect x="191.1" y="5" width="5.4" height="5" fill="#637b86"/><rect x="196.0" y="5" width="5.4" height="5" fill="#738f9d"/><rect x="200.9" y="5" width="5.4" height="5" fill="#96bccd"/><rect x="205.8" y="5" width="5.4" height="5" fill="#7d9caa"/><rect x="210.7" y="5" width="5.4" height="5" fill="#81a1b0"/><rect x="215.6" y="5" width="5.4" height="5" fill="#74919e"/><rect x="220.5" y="5" width="5.4" height="5" fill="#94b8c9"/><rect x="225.4" y="5" width="5.4" height="5" fill="#596e79"/><rect x="230.3" y="5" width="5.4" height="5" fill="#5e747f"/><rect x="235.2" y="5" width="5.4" height="5" fill="#9cc3d5"/><rect x="240.1" y="5" width="5.4" height="5" fill="#91b5c5"/><rect x="245.0" y="5" width="5.4" height="5" fill="#5f7681"/><rect x="249.9" y="5" width="5.4" height="5" fill="#92b6c7"/><rect x="254.8" y="5" width="5.4" height="5" fill="#596f79"/><rect x="259.7" y="5" width="5.4" height="5" fill="#7e9dab"/><rect x="264.6" y="5" width="5.4" height="5" fill="#6e8996"/><rect x="269.5" y="5" width="5.4" height="5" fill="#6e8895"/><rect x="274.4" y="5" width="5.4" height="5" fill="#98bdce"/><rect x="279.3" y="5" width="5.4" height="5" fill="#92b6c6"/><rect x="284.2" y="5" width="5.4" height="5" fill="#94b9ca"/><rect x="289.1" y="5" width="5.4" height="5" fill="#708b98"/><rect x="294.0" y="5" width="5.4" height="5" fill="#6f8a96"/><rect x="298.9" y="5" width="5.4" height="5" fill="#9fc6d8"/><rect x="303.8" y="5" width="5.4" height="5" fill="#5e7580"/><rect x="308.7" y="5" width="5.4" height="5" fill="#86a7b6"/><rect x="313.6" y="5" width="5.4" height="5" fill="#95bacb"/><rect x="0.0" y="10" width="5.4" height="5" fill="#a4c9e2"/><rect x="4.9" y="10" width="5.4" height="5" fill="#97b7d0"/><rect x="9.8" y="10" width="5.4" height="5" fill="#a1c5de"/><rect x="14.7" y="10" width="5.4" height="5" fill="#a0c3dc"/><rect x="19.6" y="10" width="5.4" height="5" fill="#98b9d2"/><rect x="24.5" y="10" width="5.4" height="5" fill="#97b8d1"/><rect x="29.4" y="10" width="5.4" height="5" fill="#9cbed7"/><rect x="34.3" y="10" width="5.4" height="5" fill="#a4c9e2"/><rect x="39.2" y="10" width="5.4" height="5" fill="#a0c4dd"/><rect x="44.1" y="10" width="5.4" height="5" fill="#99bad3"/><rect x="49.0" y="10" width="5.4" height="5" fill="#9cbdd6"/><rect x="53.9" y="10" width="5.4" height="5" fill="#a1c4dd"/><rect x="58.8" y="10" width="5.4" height="5" fill="#a6cbe4"/><rect x="63.7" y="10" width="5.4" height="5" fill="#a6cbe4"/><rect x="68.6" y="10" width="5.4" height="5" fill="#9dbfd8"/><rect x="73.5" y="10" width="5.4" height="5" fill="#a1c4dd"/><rect x="78.4" y="10" width="5.4" height="5" fill="#aed6ef"/><rect x="83.3" y="10" width="5.4" height="5" fill="#9dc0d9"/><rect x="88.2" y="10" width="5.4" height="5" fill="#99bad3"/><rect x="93.1" y="10" width="5.4" height="5" fill="#9bbdd6"/><rect x="98.0" y="10" width="5.4" height="5" fill="#99bad3"/><rect x="102.9" y="10" width="5.4" height="5" fill="#99b9d2"/><rect x="107.8" y="10" width="5.4" height="5" fill="#a2c5de"/><rect x="112.7" y="10" width="5.4" height="5" fill="#9cbdd6"/><rect x="117.6" y="10" width="5.4" height="5" fill="#a5cae3"/><rect x="122.5" y="10" width="5.4" height="5" fill="#acd3ec"/><rect x="127.4" y="10" width="5.4" height="5" fill="#a6cbe4"/><rect x="132.3" y="10" width="5.4" height="5" fill="#a7cde6"/><rect x="137.2" y="10" width="5.4" height="5" fill="#98b9d2"/><rect x="142.1" y="10" width="5.4" height="5" fill="#9ec0d9"/><rect x="147.0" y="10" width="5.4" height="5" fill="#a2c5de"/><rect x="151.9" y="10" width="5.4" height="5" fill="#a0c3dc"/><rect x="156.8" y="10" width="5.4" height="5" fill="#acd3ec"/><rect x="161.7" y="10" width="5.4" height="5" fill="#a2c5de"/><rect x="166.6" y="10" width="5.4" height="5" fill="#9ec0d9"/><rect x="171.5" y="10" width="5.4" height="5" fill="#a5cae3"/><rect x="176.4" y="10" width="5.4" height="5" fill="#a9cfe8"/><rect x="181.3" y="10" width="5.4" height="5" fill="#a5c9e2"/><rect x="186.2" y="10" width="5.4" height="5" fill="#a7cce5"/><rect x="191.1" y="10" width="5.4" height="5" fill="#9ec1da"/><rect x="196.0" y="10" width="5.4" height="5" fill="#abd2eb"/><rect x="200.9" y="10" width="5.4" height="5" fill="#acd4ed"/><rect x="205.8" y="10" width="5.4" height="5" fill="#a7cde6"/><rect x="210.7" y="10" width="5.4" height="5" fill="#9ec0d9"/><rect x="215.6" y="10" width="5.4" height="5" fill="#9cbed7"/><rect x="220.5" y="10" width="5.4" height="5" fill="#9fc1da"/><rect x="225.4" y="10" width="5.4" height="5" fill="#98b9d2"/><rect x="230.3" y="10" width="5.4" height="5" fill="#a6cbe4"/><rect x="235.2" y="10" width="5.4" height="5" fill="#aed6ef"/><rect x="240.1" y="10" width="5.4" height="5" fill="#a3c7e0"/><rect x="245.0" y="10" width="5.4" height="5" fill="#a4c8e1"/><rect x="249.9" y="10" width="5.4" height="5" fill="#aad1ea"/><rect x="254.8" y="10" width="5.4" height="5" fill="#9ec1da"/><rect x="259.7" y="10" width="5.4" height="5" fill="#a6cce5"/><rect x="264.6" y="10" width="5.4" height="5" fill="#a9cfe8"/><rect x="269.5" y="10" width="5.4" height="5" fill="#a7cce5"/><rect x="274.4" y="10" width="5.4" height="5" fill="#98b8d1"/><rect x="279.3" y="10" width="5.4" height="5" fill="#aed6ef"/><rect x="284.2" y="10" width="5.4" height="5" fill="#a6cbe4"/><rect x="289.1" y="10" width="5.4" height="5" fill="#a8cee7"/><rect x="294.0" y="10" width="5.4" height="5" fill="#aad0e9"/><rect x="298.9" y="10" width="5.4" height="5" fill="#a4c9e2"/><rect x="303.8" y="10" width="5.4" height="5" fill="#a9cfe8"/><rect x="308.7" y="10" width="5.4" height="5" fill="#98b9d2"/><rect x="313.6" y="10" width="5.4" height="5" fill="#a2c6df"/></svg>
<svg class="a" style="left:705px;top:70px" width="225" height="15" shape-rendering="crispEdges"><rect x="0.0" y="0" width="5.4" height="5" fill="#c1daf2"/><rect x="4.9" y="0" width="5.4" height="5" fill="#b7d0ea"/><rect x="9.8" y="0" width="5.4" height="5" fill="#b7d0ea"/><rect x="14.7" y="0" width="5.4" height="5" fill="#b3cce7"/><rect x="19.6" y="0" width="5.4" height="5" fill="#c3dcf4"/><rect x="24.5" y="0" width="5.4" height="5" fill="#c2dbf3"/><rect x="29.4" y="0" width="5.4" height="5" fill="#c4ddf5"/><rect x="34.3" y="0" width="5.4" height="5" fill="#c2dbf3"/><rect x="39.2" y="0" width="5.4" height="5" fill="#b6cfe9"/><rect x="44.1" y="0" width="5.4" height="5" fill="#c4ddf5"/><rect x="49.0" y="0" width="5.4" height="5" fill="#bbd4ed"/><rect x="53.9" y="0" width="5.4" height="5" fill="#c2dbf3"/><rect x="58.8" y="0" width="5.4" height="5" fill="#c0d9f2"/><rect x="63.7" y="0" width="5.4" height="5" fill="#bdd6ef"/><rect x="68.6" y="0" width="5.4" height="5" fill="#b3cce7"/><rect x="73.5" y="0" width="5.4" height="5" fill="#b9d2eb"/><rect x="78.4" y="0" width="5.4" height="5" fill="#c7e0f7"/><rect x="83.3" y="0" width="5.4" height="5" fill="#c1daf2"/><rect x="88.2" y="0" width="5.4" height="5" fill="#c4ddf5"/><rect x="93.1" y="0" width="5.4" height="5" fill="#b3cce6"/><rect x="98.0" y="0" width="5.4" height="5" fill="#b4cde7"/><rect x="102.9" y="0" width="5.4" height="5" fill="#b4cde8"/><rect x="107.8" y="0" width="5.4" height="5" fill="#b4cde7"/><rect x="112.7" y="0" width="5.4" height="5" fill="#b6cfe9"/><rect x="117.6" y="0" width="5.4" height="5" fill="#b1cae5"/><rect x="122.5" y="0" width="5.4" height="5" fill="#b4cde8"/><rect x="127.4" y="0" width="5.4" height="5" fill="#c1daf2"/><rect x="132.3" y="0" width="5.4" height="5" fill="#b3cce7"/><rect x="137.2" y="0" width="5.4" height="5" fill="#bcd5ee"/><rect x="142.1" y="0" width="5.4" height="5" fill="#b5cee9"/><rect x="147.0" y="0" width="5.4" height="5" fill="#bad3ec"/><rect x="151.9" y="0" width="5.4" height="5" fill="#bdd6ef"/><rect x="156.8" y="0" width="5.4" height="5" fill="#bfd8f0"/><rect x="161.7" y="0" width="5.4" height="5" fill="#bdd6ef"/><rect x="166.6" y="0" width="5.4" height="5" fill="#c0d9f1"/><rect x="171.5" y="0" width="5.4" height="5" fill="#c5def5"/><rect x="176.4" y="0" width="5.4" height="5" fill="#b4cde7"/><rect x="181.3" y="0" width="5.4" height="5" fill="#b4cde8"/><rect x="186.2" y="0" width="5.4" height="5" fill="#b0c9e4"/><rect x="191.1" y="0" width="5.4" height="5" fill="#b7d0ea"/><rect x="196.0" y="0" width="5.4" height="5" fill="#bad3ed"/><rect x="200.9" y="0" width="5.4" height="5" fill="#b6cfe9"/><rect x="205.8" y="0" width="5.4" height="5" fill="#c4ddf5"/><rect x="210.7" y="0" width="5.4" height="5" fill="#b7d0ea"/><rect x="215.6" y="0" width="5.4" height="5" fill="#bdd6ef"/><rect x="220.5" y="0" width="5.4" height="5" fill="#c3dcf4"/><rect x="0.0" y="5" width="5.4" height="5" fill="#88a2c4"/><rect x="4.9" y="5" width="5.4" height="5" fill="#768cad"/><rect x="9.8" y="5" width="5.4" height="5" fill="#859fc0"/><rect x="14.7" y="5" width="5.4" height="5" fill="#7a91b1"/><rect x="19.6" y="5" width="5.4" height="5" fill="#7287a7"/><rect x="24.5" y="5" width="5.4" height="5" fill="#7d95b6"/><rect x="29.4" y="5" width="5.4" height="5" fill="#8ca7c9"/><rect x="34.3" y="5" width="5.4" height="5" fill="#788faf"/><rect x="39.2" y="5" width="5.4" height="5" fill="#86a0c2"/><rect x="44.1" y="5" width="5.4" height="5" fill="#86a0c2"/><rect x="49.0" y="5" width="5.4" height="5" fill="#89a3c4"/><rect x="53.9" y="5" width="5.4" height="5" fill="#7f97b8"/><rect x="58.8" y="5" width="5.4" height="5" fill="#8fabcd"/><rect x="63.7" y="5" width="5.4" height="5" fill="#6f84a4"/><rect x="68.6" y="5" width="5.4" height="5" fill="#5e6f8e"/><rect x="73.5" y="5" width="5.4" height="5" fill="#7e96b6"/><rect x="78.4" y="5" width="5.4" height="5" fill="#6b7f9f"/><rect x="83.3" y="5" width="5.4" height="5" fill="#5f718f"/><rect x="88.2" y="5" width="5.4" height="5" fill="#91adcf"/><rect x="93.1" y="5" width="5.4" height="5" fill="#8ca6c8"/><rect x="98.0" y="5" width="5.4" height="5" fill="#667998"/><rect x="102.9" y="5" width="5.4" height="5" fill="#657796"/><rect x="107.8" y="5" width="5.4" height="5" fill="#7085a4"/><rect x="112.7" y="5" width="5.4" height="5" fill="#8ba5c7"/><rect x="117.6" y="5" width="5.4" height="5" fill="#7c94b5"/><rect x="122.5" y="5" width="5.4" height="5" fill="#637594"/><rect x="127.4" y="5" width="5.4" height="5" fill="#627493"/><rect x="132.3" y="5" width="5.4" height="5" fill="#677999"/><rect x="137.2" y="5" width="5.4" height="5" fill="#88a2c4"/><rect x="142.1" y="5" width="5.4" height="5" fill="#647695"/><rect x="147.0" y="5" width="5.4" height="5" fill="#7f97b8"/><rect x="151.9" y="5" width="5.4" height="5" fill="#6b7f9f"/><rect x="156.8" y="5" width="5.4" height="5" fill="#8ca7c9"/><rect x="161.7" y="5" width="5.4" height="5" fill="#5d6e8d"/><rect x="166.6" y="5" width="5.4" height="5" fill="#7287a7"/><rect x="171.5" y="5" width="5.4" height="5" fill="#6b7f9e"/><rect x="176.4" y="5" width="5.4" height="5" fill="#88a2c3"/><rect x="181.3" y="5" width="5.4" height="5" fill="#7186a6"/><rect x="186.2" y="5" width="5.4" height="5" fill="#7389a9"/><rect x="191.1" y="5" width="5.4" height="5" fill="#7288a8"/><rect x="196.0" y="5" width="5.4" height="5" fill="#7f98b9"/><rect x="200.9" y="5" width="5.4" height="5" fill="#6b7f9e"/><rect x="205.8" y="5" width="5.4" height="5" fill="#8099ba"/><rect x="210.7" y="5" width="5.4" height="5" fill="#839cbd"/><rect x="215.6" y="5" width="5.4" height="5" fill="#8aa5c7"/><rect x="220.5" y="5" width="5.4" height="5" fill="#6d81a1"/><rect x="0.0" y="10" width="5.4" height="5" fill="#a1badd"/><rect x="4.9" y="10" width="5.4" height="5" fill="#9eb6d9"/><rect x="9.8" y="10" width="5.4" height="5" fill="#a2bbde"/><rect x="14.7" y="10" width="5.4" height="5" fill="#91a8cb"/><rect x="19.6" y="10" width="5.4" height="5" fill="#94abce"/><rect x="24.5" y="10" width="5.4" height="5" fill="#94abce"/><rect x="29.4" y="10" width="5.4" height="5" fill="#a3bcdf"/><rect x="34.3" y="10" width="5.4" height="5" fill="#97afd2"/><rect x="39.2" y="10" width="5.4" height="5" fill="#9ab2d5"/><rect x="44.1" y="10" width="5.4" height="5" fill="#a2badd"/><rect x="49.0" y="10" width="5.4" height="5" fill="#a4bde0"/><rect x="53.9" y="10" width="5.4" height="5" fill="#879cbf"/><rect x="58.8" y="10" width="5.4" height="5" fill="#a1b9dc"/><rect x="63.7" y="10" width="5.4" height="5" fill="#9bb3d6"/><rect x="68.6" y="10" width="5.4" height="5" fill="#9cb4d7"/><rect x="73.5" y="10" width="5.4" height="5" fill="#93a9cc"/><rect x="78.4" y="10" width="5.4" height="5" fill="#a2bbde"/><rect x="83.3" y="10" width="5.4" height="5" fill="#96aed1"/><rect x="88.2" y="10" width="5.4" height="5" fill="#99b1d4"/><rect x="93.1" y="10" width="5.4" height="5" fill="#8ba1c4"/><rect x="98.0" y="10" width="5.4" height="5" fill="#a4bde0"/><rect x="102.9" y="10" width="5.4" height="5" fill="#9ab2d5"/><rect x="107.8" y="10" width="5.4" height="5" fill="#96add0"/><rect x="112.7" y="10" width="5.4" height="5" fill="#879dc0"/><rect x="117.6" y="10" width="5.4" height="5" fill="#95accf"/><rect x="122.5" y="10" width="5.4" height="5" fill="#96add0"/><rect x="127.4" y="10" width="5.4" height="5" fill="#90a7ca"/><rect x="132.3" y="10" width="5.4" height="5" fill="#9cb3d6"/><rect x="137.2" y="10" width="5.4" height="5" fill="#a4bcdf"/><rect x="142.1" y="10" width="5.4" height="5" fill="#95add0"/><rect x="147.0" y="10" width="5.4" height="5" fill="#899fc2"/><rect x="151.9" y="10" width="5.4" height="5" fill="#8ea5c8"/><rect x="156.8" y="10" width="5.4" height="5" fill="#9db5d8"/><rect x="161.7" y="10" width="5.4" height="5" fill="#90a6c9"/><rect x="166.6" y="10" width="5.4" height="5" fill="#8ba1c4"/><rect x="171.5" y="10" width="5.4" height="5" fill="#9db5d8"/><rect x="176.4" y="10" width="5.4" height="5" fill="#93aacd"/><rect x="181.3" y="10" width="5.4" height="5" fill="#9ab1d4"/><rect x="186.2" y="10" width="5.4" height="5" fill="#9db5d8"/><rect x="191.1" y="10" width="5.4" height="5" fill="#9cb4d7"/><rect x="196.0" y="10" width="5.4" height="5" fill="#9eb7da"/><rect x="200.9" y="10" width="5.4" height="5" fill="#9ab2d5"/><rect x="205.8" y="10" width="5.4" height="5" fill="#a3bcdf"/><rect x="210.7" y="10" width="5.4" height="5" fill="#99b0d3"/><rect x="215.6" y="10" width="5.4" height="5" fill="#a2bbde"/><rect x="220.5" y="10" width="5.4" height="5" fill="#8ea4c7"/></svg>
<div class="a" style="left:182px;top:85px;width:748px;height:4px;background:#c0defa"></div>
<div class="a" style="left:182px;top:89px;width:5px;height:652px;background:#c0defa"></div>
<div class="a" style="left:187px;top:89px;width:743px;height:646px;background:#fff;border-left:2px solid #707070;border-top:2px solid #707070"></div>
<div class="a" style="left:207px;top:91px;width:2px;height:644px;background:#c8c8c8"></div>
<div class="a" style="left:187px;top:735px;width:743px;height:2px;background:#f8f8f4"></div>
<div class="a" style="left:182px;top:737px;width:748px;height:4px;background:#c0defa"></div>
<div class="a" style="left:182px;top:741px;width:748px;height:1px;background:#807c7c"></div>
<div class="a" style="left:182px;top:742px;width:748px;height:3px;background:#f2fafc"></div>
<div class="a" style="left:182px;top:745px;width:748px;height:1px;background:#c4c4d8"></div>
<div class="a" style="left:182px;top:746px;width:748px;height:11px;background:#cddcee"></div>
<div class="t" style="left:186px;top:750px">Output</div>
<svg class="a" style="left:244px;top:290px" width="195" height="15" shape-rendering="crispEdges"><rect x="0.0" y="0.0" width="5.7" height="5.4" fill="#fef3fe"/><rect x="5.2" y="0.0" width="5.7" height="5.4" fill="#fce1fc"/><rect x="10.4" y="0.0" width="5.7" height="5.4" fill="#fce3fc"/><rect x="15.6" y="0.0" width="5.7" height="5.4" fill="#fde8fd"/><rect x="20.8" y="0.0" width="5.7" height="5.4" fill="#fef2fe"/><rect x="26.0" y="0.0" width="5.7" height="5.4" fill="#fcddfc"/><rect x="31.2" y="0.0" width="5.7" height="5.4" fill="#fcddfc"/><rect x="36.4" y="0.0" width="5.7" height="5.4" fill="#fde7fd"/><rect x="41.6" y="0.0" width="5.7" height="5.4" fill="#fde7fd"/><rect x="46.8" y="0.0" width="5.7" height="5.4" fill="#fdf1fd"/><rect x="52.0" y="0.0" width="5.7" height="5.4" fill="#fef9fe"/><rect x="57.2" y="0.0" width="5.7" height="5.4" fill="#fdecfd"/><rect x="62.4" y="0.0" width="5.7" height="5.4" fill="#fde5fd"/><rect x="67.6" y="0.0" width="5.7" height="5.4" fill="#fef7fe"/><rect x="72.8" y="0.0" width="5.7" height="5.4" fill="#fcddfc"/><rect x="78.0" y="0.0" width="5.7" height="5.4" fill="#fdf1fd"/><rect x="83.2" y="0.0" width="5.7" height="5.4" fill="#fdf1fd"/><rect x="88.4" y="0.0" width="5.7" height="5.4" fill="#fef8fe"/><rect x="93.6" y="0.0" width="5.7" height="5.4" fill="#fcd6fc"/><rect x="98.8" y="0.0" width="5.7" height="5.4" fill="#fcdffc"/><rect x="104.0" y="0.0" width="5.7" height="5.4" fill="#fcdafc"/><rect x="109.2" y="0.0" width="5.7" height="5.4" fill="#fce3fc"/><rect x="114.4" y="0.0" width="5.7" height="5.4" fill="#fef8fe"/><rect x="119.6" y="0.0" width="5.7" height="5.4" fill="#fdeefd"/><rect x="124.8" y="0.0" width="5.7" height="5.4" fill="#fde8fd"/><rect x="130.0" y="0.0" width="5.7" height="5.4" fill="#fef5fe"/><rect x="135.2" y="0.0" width="5.7" height="5.4" fill="#fcd8fc"/><rect x="140.4" y="0.0" width="5.7" height="5.4" fill="#fdecfd"/><rect x="145.6" y="0.0" width="5.7" height="5.4" fill="#fef4fe"/><rect x="150.8" y="0.0" width="5.7" height="5.4" fill="#fcdcfc"/><rect x="156.0" y="0.0" width="5.7" height="5.4" fill="#fef5fe"/><rect x="161.2" y="0.0" width="5.7" height="5.4" fill="#fcd9fc"/><rect x="166.4" y="0.0" width="5.7" height="5.4" fill="#fde9fd"/><rect x="171.6" y="0.0" width="5.7" height="5.4" fill="#fde6fd"/><rect x="176.8" y="0.0" width="5.7" height="5.4" fill="#fdedfd"/><rect x="182.0" y="0.0" width="5.7" height="5.4" fill="#fde8fd"/><rect x="187.2" y="0.0" width="5.7" height="5.4" fill="#fef3fe"/><rect x="192.4" y="0.0" width="5.7" height="5.4" fill="#fef8fe"/><rect x="0.0" y="5.0" width="5.7" height="5.4" fill="#f8a6f8"/><rect x="5.2" y="5.0" width="5.7" height="5.4" fill="#fac4fa"/><rect x="10.4" y="5.0" width="5.7" height="5.4" fill="#f8aaf8"/><rect x="15.6" y="5.0" width="5.7" height="5.4" fill="#fac5fa"/><rect x="20.8" y="5.0" width="5.7" height="5.4" fill="#f8a1f8"/><rect x="26.0" y="5.0" width="5.7" height="5.4" fill="#f8a5f8"/><rect x="31.2" y="5.0" width="5.7" height="5.4" fill="#f8acf8"/><rect x="36.4" y="5.0" width="5.7" height="5.4" fill="#f8abf8"/><rect x="41.6" y="5.0" width="5.7" height="5.4" fill="#f9b4f9"/><rect x="46.8" y="5.0" width="5.7" height="5.4" fill="#f8adf8"/><rect x="52.0" y="5.0" width="5.7" height="5.4" fill="#fbc9fb"/><rect x="57.2" y="5.0" width="5.7" height="5.4" fill="#f9b9f9"/><rect x="62.4" y="5.0" width="5.7" height="5.4" fill="#f8a8f8"/><rect x="67.6" y="5.0" width="5.7" height="5.4" fill="#fac6fa"/><rect x="72.8" y="5.0" width="5.7" height="5.4" fill="#f8a4f8"/><rect x="78.0" y="5.0" width="5.7" height="5.4" fill="#f8a5f8"/><rect x="83.2" y="5.0" width="5.7" height="5.4" fill="#fabcfa"/><rect x="88.4" y="5.0" width="5.7" height="5.4" fill="#fabefa"/><rect x="93.6" y="5.0" width="5.7" height="5.4" fill="#f9baf9"/><rect x="98.8" y="5.0" width="5.7" height="5.4" fill="#fabdfa"/><rect x="104.0" y="5.0" width="5.7" height="5.4" fill="#f8a0f8"/><rect x="109.2" y="5.0" width="5.7" height="5.4" fill="#fabdfa"/><rect x="114.4" y="5.0" width="5.7" height="5.4" fill="#fbcefb"/><rect x="119.6" y="5.0" width="5.7" height="5.4" fill="#fbcbfb"/><rect x="124.8" y="5.0" width="5.7" height="5.4" fill="#f8adf8"/><rect x="130.0" y="5.0" width="5.7" height="5.4" fill="#f8a0f8"/><rect x="135.2" y="5.0" width="5.7" height="5.4" fill="#f9b8f9"/><rect x="140.4" y="5.0" width="5.7" height="5.4" fill="#f9b8f9"/><rect x="145.6" y="5.0" width="5.7" height="5.4" fill="#f9b5f9"/><rect x="150.8" y="5.0" width="5.7" height="5.4" fill="#f8acf8"/><rect x="156.0" y="5.0" width="5.7" height="5.4" fill="#fac5fa"/><rect x="161.2" y="5.0" width="5.7" height="5.4" fill="#f9b2f9"/><rect x="166.4" y="5.0" width="5.7" height="5.4" fill="#f9b5f9"/><rect x="171.6" y="5.0" width="5.7" height="5.4" fill="#f9b2f9"/><rect x="176.8" y="5.0" width="5.7" height="5.4" fill="#fac7fa"/><rect x="182.0" y="5.0" width="5.7" height="5.4" fill="#fac7fa"/><rect x="187.2" y="5.0" width="5.7" height="5.4" fill="#fabffa"/><rect x="192.4" y="5.0" width="5.7" height="5.4" fill="#f8a3f8"/><rect x="0.0" y="10.0" width="5.7" height="5.4" fill="#fdedfd"/><rect x="5.2" y="10.0" width="5.7" height="5.4" fill="#fde4fd"/><rect x="10.4" y="10.0" width="5.7" height="5.4" fill="#fdeefd"/><rect x="15.6" y="10.0" width="5.7" height="5.4" fill="#fef5fe"/><rect x="20.8" y="10.0" width="5.7" height="5.4" fill="#fef7fe"/><rect x="26.0" y="10.0" width="5.7" height="5.4" fill="#fcddfc"/><rect x="31.2" y="10.0" width="5.7" height="5.4" fill="#fcdefc"/><rect x="36.4" y="10.0" width="5.7" height="5.4" fill="#fdecfd"/><rect x="41.6" y="10.0" width="5.7" height="5.4" fill="#fce1fc"/><rect x="46.8" y="10.0" width="5.7" height="5.4" fill="#fce1fc"/><rect x="52.0" y="10.0" width="5.7" height="5.4" fill="#fcdafc"/><rect x="57.2" y="10.0" width="5.7" height="5.4" fill="#fcd7fc"/><rect x="62.4" y="10.0" width="5.7" height="5.4" fill="#fdebfd"/><rect x="67.6" y="10.0" width="5.7" height="5.4" fill="#fcd6fc"/><rect x="72.8" y="10.0" width="5.7" height="5.4" fill="#fcd7fc"/><rect x="78.0" y="10.0" width="5.7" height="5.4" fill="#fde4fd"/><rect x="83.2" y="10.0" width="5.7" height="5.4" fill="#fcdafc"/><rect x="88.4" y="10.0" width="5.7" height="5.4" fill="#fde8fd"/><rect x="93.6" y="10.0" width="5.7" height="5.4" fill="#fdecfd"/><rect x="98.8" y="10.0" width="5.7" height="5.4" fill="#fdf0fd"/><rect x="104.0" y="10.0" width="5.7" height="5.4" fill="#fcdafc"/><rect x="109.2" y="10.0" width="5.7" height="5.4" fill="#fef3fe"/><rect x="114.4" y="10.0" width="5.7" height="5.4" fill="#fef7fe"/><rect x="119.6" y="10.0" width="5.7" height="5.4" fill="#fcddfc"/><rect x="124.8" y="10.0" width="5.7" height="5.4" fill="#fcdefc"/><rect x="130.0" y="10.0" width="5.7" height="5.4" fill="#fde8fd"/><rect x="135.2" y="10.0" width="5.7" height="5.4" fill="#fcdcfc"/><rect x="140.4" y="10.0" width="5.7" height="5.4" fill="#fef7fe"/><rect x="145.6" y="10.0" width="5.7" height="5.4" fill="#fdf0fd"/><rect x="150.8" y="10.0" width="5.7" height="5.4" fill="#fdeffd"/><rect x="156.0" y="10.0" width="5.7" height="5.4" fill="#fdeafd"/><rect x="161.2" y="10.0" width="5.7" height="5.4" fill="#fef3fe"/><rect x="166.4" y="10.0" width="5.7" height="5.4" fill="#fef7fe"/><rect x="171.6" y="10.0" width="5.7" height="5.4" fill="#fdedfd"/><rect x="176.8" y="10.0" width="5.7" height="5.4" fill="#fcdafc"/><rect x="182.0" y="10.0" width="5.7" height="5.4" fill="#fcd7fc"/><rect x="187.2" y="10.0" width="5.7" height="5.4" fill="#fcdffc"/><rect x="192.4" y="10.0" width="5.7" height="5.4" fill="#fde8fd"/></svg>
<svg class="a" style="left:259px;top:309px" width="26" height="10" shape-rendering="crispEdges"><rect x="0.0" y="0.0" width="5.7" height="5.4" fill="#f8a2f8"/><rect x="5.2" y="0.0" width="5.7" height="5.4" fill="#fbc9fb"/><rect x="10.4" y="0.0" width="5.7" height="5.4" fill="#fbcefb"/><rect x="15.6" y="0.0" width="5.7" height="5.4" fill="#f8a0f8"/><rect x="20.8" y="0.0" width="5.7" height="5.4" fill="#fac7fa"/><rect x="26.0" y="0.0" width="5.7" height="5.4" fill="#fbcafb"/><rect x="0.0" y="5.0" width="5.7" height="5.4" fill="#fce2fc"/><rect x="5.2" y="5.0" width="5.7" height="5.4" fill="#fdedfd"/><rect x="10.4" y="5.0" width="5.7" height="5.4" fill="#fcdafc"/><rect x="15.6" y="5.0" width="5.7" height="5.4" fill="#fdf1fd"/><rect x="20.8" y="5.0" width="5.7" height="5.4" fill="#fcd7fc"/><rect x="26.0" y="5.0" width="5.7" height="5.4" fill="#fdeefd"/></svg>
<svg class="a" style="left:275px;top:320px" width="30" height="15" shape-rendering="crispEdges"><rect x="0" y="0" width="5" height="5" fill="#e0e0e0"/><rect x="0" y="5" width="30" height="5" fill="#b8b8bc"/><rect x="10" y="5" width="5" height="5" fill="#a09890"/><rect x="20" y="5" width="10" height="5" fill="#8c909c"/><rect x="0" y="10" width="30" height="5" fill="#ececee"/></svg>
<svg class="a" style="left:310px;top:335px" width="105" height="15" shape-rendering="crispEdges"><rect x="0.0" y="0.0" width="5.7" height="5.4" fill="#fcd9fc"/><rect x="5.2" y="0.0" width="5.7" height="5.4" fill="#fcd8fc"/><rect x="10.4" y="0.0" width="5.7" height="5.4" fill="#fcdafc"/><rect x="15.6" y="0.0" width="5.7" height="5.4" fill="#fef6fe"/><rect x="20.8" y="0.0" width="5.7" height="5.4" fill="#fde4fd"/><rect x="26.0" y="0.0" width="5.7" height="5.4" fill="#fdeafd"/><rect x="31.2" y="0.0" width="5.7" height="5.4" fill="#fde6fd"/><rect x="36.4" y="0.0" width="5.7" height="5.4" fill="#fef5fe"/><rect x="41.6" y="0.0" width="5.7" height="5.4" fill="#fef2fe"/><rect x="46.8" y="0.0" width="5.7" height="5.4" fill="#fde9fd"/><rect x="52.0" y="0.0" width="5.7" height="5.4" fill="#fef1fe"/><rect x="57.2" y="0.0" width="5.7" height="5.4" fill="#fde9fd"/><rect x="62.4" y="0.0" width="5.7" height="5.4" fill="#fef8fe"/><rect x="67.6" y="0.0" width="5.7" height="5.4" fill="#fef6fe"/><rect x="72.8" y="0.0" width="5.7" height="5.4" fill="#fce0fc"/><rect x="78.0" y="0.0" width="5.7" height="5.4" fill="#fdeafd"/><rect x="83.2" y="0.0" width="5.7" height="5.4" fill="#fde7fd"/><rect x="88.4" y="0.0" width="5.7" height="5.4" fill="#fcdffc"/><rect x="93.6" y="0.0" width="5.7" height="5.4" fill="#fdecfd"/><rect x="98.8" y="0.0" width="5.7" height="5.4" fill="#fef7fe"/><rect x="104.0" y="0.0" width="5.7" height="5.4" fill="#fcdefc"/><rect x="0.0" y="5.0" width="5.7" height="5.4" fill="#f9b3f9"/><rect x="5.2" y="5.0" width="5.7" height="5.4" fill="#f9b0f9"/><rect x="10.4" y="5.0" width="5.7" height="5.4" fill="#f9b2f9"/><rect x="15.6" y="5.0" width="5.7" height="5.4" fill="#f8a1f8"/><rect x="20.8" y="5.0" width="5.7" height="5.4" fill="#fabefa"/><rect x="26.0" y="5.0" width="5.7" height="5.4" fill="#f8abf8"/><rect x="31.2" y="5.0" width="5.7" height="5.4" fill="#fabefa"/><rect x="36.4" y="5.0" width="5.7" height="5.4" fill="#f9b4f9"/><rect x="41.6" y="5.0" width="5.7" height="5.4" fill="#f9b0f9"/><rect x="46.8" y="5.0" width="5.7" height="5.4" fill="#fac0fa"/><rect x="52.0" y="5.0" width="5.7" height="5.4" fill="#fbcbfb"/><rect x="57.2" y="5.0" width="5.7" height="5.4" fill="#f9b9f9"/><rect x="62.4" y="5.0" width="5.7" height="5.4" fill="#f8adf8"/><rect x="67.6" y="5.0" width="5.7" height="5.4" fill="#f9b3f9"/><rect x="72.8" y="5.0" width="5.7" height="5.4" fill="#f9baf9"/><rect x="78.0" y="5.0" width="5.7" height="5.4" fill="#f9b1f9"/><rect x="83.2" y="5.0" width="5.7" height="5.4" fill="#fac7fa"/><rect x="88.4" y="5.0" width="5.7" height="5.4" fill="#fac7fa"/><rect x="93.6" y="5.0" width="5.7" height="5.4" fill="#fac0fa"/><rect x="98.8" y="5.0" width="5.7" height="5.4" fill="#f8a9f8"/><rect x="104.0" y="5.0" width="5.7" height="5.4" fill="#fac6fa"/><rect x="0.0" y="10.0" width="5.7" height="5.4" fill="#fef5fe"/><rect x="5.2" y="10.0" width="5.7" height="5.4" fill="#fef6fe"/><rect x="10.4" y="10.0" width="5.7" height="5.4" fill="#fef8fe"/><rect x="15.6" y="10.0" width="5.7" height="5.4" fill="#fdeffd"/><rect x="20.8" y="10.0" width="5.7" height="5.4" fill="#fde5fd"/><rect x="26.0" y="10.0" width="5.7" height="5.4" fill="#fcdcfc"/><rect x="31.2" y="10.0" width="5.7" height="5.4" fill="#fdedfd"/><rect x="36.4" y="10.0" width="5.7" height="5.4" fill="#fdecfd"/><rect x="41.6" y="10.0" width="5.7" height="5.4" fill="#fdeffd"/><rect x="46.8" y="10.0" width="5.7" height="5.4" fill="#fdeefd"/><rect x="52.0" y="10.0" width="5.7" height="5.4" fill="#fcdefc"/><rect x="57.2" y="10.0" width="5.7" height="5.4" fill="#fde6fd"/><rect x="62.4" y="10.0" width="5.7" height="5.4" fill="#fdf0fd"/><rect x="67.6" y="10.0" width="5.7" height="5.4" fill="#fef5fe"/><rect x="72.8" y="10.0" width="5.7" height="5.4" fill="#fcdefc"/><rect x="78.0" y="10.0" width="5.7" height="5.4" fill="#fce0fc"/><rect x="83.2" y="10.0" width="5.7" height="5.4" fill="#fcdcfc"/><rect x="88.4" y="10.0" width="5.7" height="5.4" fill="#fdf1fd"/><rect x="93.6" y="10.0" width="5.7" height="5.4" fill="#fde6fd"/><rect x="98.8" y="10.0" width="5.7" height="5.4" fill="#fcd9fc"/><rect x="104.0" y="10.0" width="5.7" height="5.4" fill="#fde4fd"/></svg>
<svg class="a" style="left:290px;top:350px" width="65" height="10" shape-rendering="crispEdges"><rect x="0.0" y="0.0" width="5.7" height="5.4" fill="#f9aef9"/><rect x="5.2" y="0.0" width="5.7" height="5.4" fill="#f8a8f8"/><rect x="10.4" y="0.0" width="5.7" height="5.4" fill="#fac7fa"/><rect x="15.6" y="0.0" width="5.7" height="5.4" fill="#f8a0f8"/><rect x="20.8" y="0.0" width="5.7" height="5.4" fill="#fac6fa"/><rect x="26.0" y="0.0" width="5.7" height="5.4" fill="#f9b0f9"/><rect x="31.2" y="0.0" width="5.7" height="5.4" fill="#fbcbfb"/><rect x="36.4" y="0.0" width="5.7" height="5.4" fill="#f8abf8"/><rect x="41.6" y="0.0" width="5.7" height="5.4" fill="#fac8fa"/><rect x="46.8" y="0.0" width="5.7" height="5.4" fill="#f9aef9"/><rect x="52.0" y="0.0" width="5.7" height="5.4" fill="#f8adf8"/><rect x="57.2" y="0.0" width="5.7" height="5.4" fill="#f8abf8"/><rect x="62.4" y="0.0" width="5.7" height="5.4" fill="#f9baf9"/><rect x="0.0" y="5.0" width="5.7" height="5.4" fill="#fcdbfc"/><rect x="5.2" y="5.0" width="5.7" height="5.4" fill="#fcd6fc"/><rect x="10.4" y="5.0" width="5.7" height="5.4" fill="#fef5fe"/><rect x="15.6" y="5.0" width="5.7" height="5.4" fill="#fde7fd"/><rect x="20.8" y="5.0" width="5.7" height="5.4" fill="#fcd7fc"/><rect x="26.0" y="5.0" width="5.7" height="5.4" fill="#fcdffc"/><rect x="31.2" y="5.0" width="5.7" height="5.4" fill="#fdeafd"/><rect x="36.4" y="5.0" width="5.7" height="5.4" fill="#fdeefd"/><rect x="41.6" y="5.0" width="5.7" height="5.4" fill="#fcd8fc"/><rect x="46.8" y="5.0" width="5.7" height="5.4" fill="#fef6fe"/><rect x="52.0" y="5.0" width="5.7" height="5.4" fill="#fcdefc"/><rect x="57.2" y="5.0" width="5.7" height="5.4" fill="#fcdcfc"/><rect x="62.4" y="5.0" width="5.7" height="5.4" fill="#fef4fe"/></svg>
<svg class="a" style="left:290px;top:365px" width="340" height="15" shape-rendering="crispEdges"><rect x="0.0" y="0.0" width="5.7" height="5.4" fill="#fdecfd"/><rect x="5.2" y="0.0" width="5.7" height="5.4" fill="#fcd9fc"/><rect x="10.4" y="0.0" width="5.7" height="5.4" fill="#fcdbfc"/><rect x="15.6" y="0.0" width="5.7" height="5.4" fill="#fef2fe"/><rect x="20.8" y="0.0" width="5.7" height="5.4" fill="#fcdbfc"/><rect x="26.0" y="0.0" width="5.7" height="5.4" fill="#fce3fc"/><rect x="31.2" y="0.0" width="5.7" height="5.4" fill="#fef8fe"/><rect x="36.4" y="0.0" width="5.7" height="5.4" fill="#fcd8fc"/><rect x="41.6" y="0.0" width="5.7" height="5.4" fill="#fdf0fd"/><rect x="46.8" y="0.0" width="5.7" height="5.4" fill="#fdeefd"/><rect x="52.0" y="0.0" width="5.7" height="5.4" fill="#fdeafd"/><rect x="57.2" y="0.0" width="5.7" height="5.4" fill="#fde4fd"/><rect x="62.4" y="0.0" width="5.7" height="5.4" fill="#fef5fe"/><rect x="67.6" y="0.0" width="5.7" height="5.4" fill="#fce1fc"/><rect x="72.8" y="0.0" width="5.7" height="5.4" fill="#fcdcfc"/><rect x="78.0" y="0.0" width="5.7" height="5.4" fill="#fde7fd"/><rect x="83.2" y="0.0" width="5.7" height="5.4" fill="#fcddfc"/><rect x="88.4" y="0.0" width="5.7" height="5.4" fill="#fce3fc"/><rect x="93.6" y="0.0" width="5.7" height="5.4" fill="#fcdcfc"/><rect x="98.8" y="0.0" width="5.7" height="5.4" fill="#fef3fe"/><rect x="104.0" y="0.0" width="5.7" height="5.4" fill="#fdedfd"/><rect x="109.2" y="0.0" width="5.7" height="5.4" fill="#fde9fd"/><rect x="114.4" y="0.0" width="5.7" height="5.4" fill="#fef5fe"/><rect x="119.6" y="0.0" width="5.7" height="5.4" fill="#fcd7fc"/><rect x="124.8" y="0.0" width="5.7" height="5.4" fill="#fce3fc"/><rect x="130.0" y="0.0" width="5.7" height="5.4" fill="#fef6fe"/><rect x="135.2" y="0.0" width="5.7" height="5.4" fill="#fde5fd"/><rect x="140.4" y="0.0" width="5.7" height="5.4" fill="#fdebfd"/><rect x="145.6" y="0.0" width="5.7" height="5.4" fill="#fef2fe"/><rect x="150.8" y="0.0" width="5.7" height="5.4" fill="#fef3fe"/><rect x="156.0" y="0.0" width="5.7" height="5.4" fill="#fde9fd"/><rect x="161.2" y="0.0" width="5.7" height="5.4" fill="#fef7fe"/><rect x="166.4" y="0.0" width="5.7" height="5.4" fill="#fde5fd"/><rect x="171.6" y="0.0" width="5.7" height="5.4" fill="#fde7fd"/><rect x="176.8" y="0.0" width="5.7" height="5.4" fill="#fef5fe"/><rect x="182.0" y="0.0" width="5.7" height="5.4" fill="#fcdafc"/><rect x="187.2" y="0.0" width="5.7" height="5.4" fill="#fef8fe"/><rect x="192.4" y="0.0" width="5.7" height="5.4" fill="#fef3fe"/><rect x="197.6" y="0.0" width="5.7" height="5.4" fill="#fcdcfc"/><rect x="202.8" y="0.0" width="5.7" height="5.4" fill="#fef1fe"/><rect x="208.0" y="0.0" width="5.7" height="5.4" fill="#fdeafd"/><rect x="213.2" y="0.0" width="5.7" height="5.4" fill="#fde5fd"/><rect x="218.4" y="0.0" width="5.7" height="5.4" fill="#fdeafd"/><rect x="223.6" y="0.0" width="5.7" height="5.4" fill="#fde8fd"/><rect x="228.8" y="0.0" width="5.7" height="5.4" fill="#fde7fd"/><rect x="234.0" y="0.0" width="5.7" height="5.4" fill="#fde8fd"/><rect x="239.2" y="0.0" width="5.7" height="5.4" fill="#fef7fe"/><rect x="244.4" y="0.0" width="5.7" height="5.4" fill="#fcdcfc"/><rect x="249.6" y="0.0" width="5.7" height="5.4" fill="#fdeffd"/><rect x="254.8" y="0.0" width="5.7" height="5.4" fill="#fef7fe"/><rect x="260.0" y="0.0" width="5.7" height="5.4" fill="#fdebfd"/><rect x="265.2" y="0.0" width="5.7" height="5.4" fill="#fcddfc"/><rect x="270.4" y="0.0" width="5.7" height="5.4" fill="#fce3fc"/><rect x="275.6" y="0.0" width="5.7" height="5.4" fill="#fde9fd"/><rect x="280.8" y="0.0" width="5.7" height="5.4" fill="#fde8fd"/><rect x="286.0" y="0.0" width="5.7" height="5.4" fill="#fef1fe"/><rect x="291.2" y="0.0" width="5.7" height="5.4" fill="#fce3fc"/><rect x="296.4" y="0.0" width="5.7" height="5.4" fill="#fdedfd"/><rect x="301.6" y="0.0" width="5.7" height="5.4" fill="#fef7fe"/><rect x="306.8" y="0.0" width="5.7" height="5.4" fill="#fef5fe"/><rect x="312.0" y="0.0" width="5.7" height="5.4" fill="#fef6fe"/><rect x="317.2" y="0.0" width="5.7" height="5.4" fill="#fce1fc"/><rect x="322.4" y="0.0" width="5.7" height="5.4" fill="#fcdafc"/><rect x="327.6" y="0.0" width="5.7" height="5.4" fill="#fcdffc"/><rect x="332.8" y="0.0" width="5.7" height="5.4" fill="#fef1fe"/><rect x="338.0" y="0.0" width="5.7" height="5.4" fill="#fef4fe"/><rect x="0.0" y="5.0" width="5.7" height="5.4" fill="#f8a2f8"/><rect x="5.2" y="5.0" width="5.7" height="5.4" fill="#fabefa"/><rect x="10.4" y="5.0" width="5.7" height="5.4" fill="#fac7fa"/><rect x="15.6" y="5.0" width="5.7" height="5.4" fill="#f9b4f9"/><rect x="20.8" y="5.0" width="5.7" height="5.4" fill="#f9b2f9"/><rect x="26.0" y="5.0" width="5.7" height="5.4" fill="#f9b6f9"/><rect x="31.2" y="5.0" width="5.7" height="5.4" fill="#f9baf9"/><rect x="36.4" y="5.0" width="5.7" height="5.4" fill="#fac1fa"/><rect x="41.6" y="5.0" width="5.7" height="5.4" fill="#f9b8f9"/><rect x="46.8" y="5.0" width="5.7" height="5.4" fill="#f9baf9"/><rect x="52.0" y="5.0" width="5.7" height="5.4" fill="#f9aff9"/><rect x="57.2" y="5.0" width="5.7" height="5.4" fill="#f9baf9"/><rect x="62.4" y="5.0" width="5.7" height="5.4" fill="#fabefa"/><rect x="67.6" y="5.0" width="5.7" height="5.4" fill="#f8a1f8"/><rect x="72.8" y="5.0" width="5.7" height="5.4" fill="#fbcafb"/><rect x="78.0" y="5.0" width="5.7" height="5.4" fill="#f8acf8"/><rect x="83.2" y="5.0" width="5.7" height="5.4" fill="#fabcfa"/><rect x="88.4" y="5.0" width="5.7" height="5.4" fill="#f8a9f8"/><rect x="93.6" y="5.0" width="5.7" height="5.4" fill="#f9aef9"/><rect x="98.8" y="5.0" width="5.7" height="5.4" fill="#f9b4f9"/><rect x="104.0" y="5.0" width="5.7" height="5.4" fill="#f9b2f9"/><rect x="109.2" y="5.0" width="5.7" height="5.4" fill="#fac4fa"/><rect x="114.4" y="5.0" width="5.7" height="5.4" fill="#fbcefb"/><rect x="119.6" y="5.0" width="5.7" height="5.4" fill="#f8acf8"/><rect x="124.8" y="5.0" width="5.7" height="5.4" fill="#fac3fa"/><rect x="130.0" y="5.0" width="5.7" height="5.4" fill="#fbcafb"/><rect x="135.2" y="5.0" width="5.7" height="5.4" fill="#f8a9f8"/><rect x="140.4" y="5.0" width="5.7" height="5.4" fill="#f9b3f9"/><rect x="145.6" y="5.0" width="5.7" height="5.4" fill="#fbcefb"/><rect x="150.8" y="5.0" width="5.7" height="5.4" fill="#f9b7f9"/><rect x="156.0" y="5.0" width="5.7" height="5.4" fill="#fac8fa"/><rect x="161.2" y="5.0" width="5.7" height="5.4" fill="#f8a6f8"/><rect x="166.4" y="5.0" width="5.7" height="5.4" fill="#fac2fa"/><rect x="171.6" y="5.0" width="5.7" height="5.4" fill="#f8a3f8"/><rect x="176.8" y="5.0" width="5.7" height="5.4" fill="#f9b2f9"/><rect x="182.0" y="5.0" width="5.7" height="5.4" fill="#fbccfb"/><rect x="187.2" y="5.0" width="5.7" height="5.4" fill="#fabcfa"/><rect x="192.4" y="5.0" width="5.7" height="5.4" fill="#f8a2f8"/><rect x="197.6" y="5.0" width="5.7" height="5.4" fill="#f9aef9"/><rect x="202.8" y="5.0" width="5.7" height="5.4" fill="#fac8fa"/><rect x="208.0" y="5.0" width="5.7" height="5.4" fill="#fabefa"/><rect x="213.2" y="5.0" width="5.7" height="5.4" fill="#fac2fa"/><rect x="218.4" y="5.0" width="5.7" height="5.4" fill="#fbcbfb"/><rect x="223.6" y="5.0" width="5.7" height="5.4" fill="#f9b3f9"/><rect x="228.8" y="5.0" width="5.7" height="5.4" fill="#f9aef9"/><rect x="234.0" y="5.0" width="5.7" height="5.4" fill="#fac5fa"/><rect x="239.2" y="5.0" width="5.7" height="5.4" fill="#f9b5f9"/><rect x="244.4" y="5.0" width="5.7" height="5.4" fill="#f8a7f8"/><rect x="249.6" y="5.0" width="5.7" height="5.4" fill="#f8a5f8"/><rect x="254.8" y="5.0" width="5.7" height="5.4" fill="#fac7fa"/><rect x="260.0" y="5.0" width="5.7" height="5.4" fill="#fbccfb"/><rect x="265.2" y="5.0" width="5.7" height="5.4" fill="#f8a4f8"/><rect x="270.4" y="5.0" width="5.7" height="5.4" fill="#fac0fa"/><rect x="275.6" y="5.0" width="5.7" height="5.4" fill="#fac7fa"/><rect x="280.8" y="5.0" width="5.7" height="5.4" fill="#f8aaf8"/><rect x="286.0" y="5.0" width="5.7" height="5.4" fill="#fac3fa"/><rect x="291.2" y="5.0" width="5.7" height="5.4" fill="#f8adf8"/><rect x="296.4" y="5.0" width="5.7" height="5.4" fill="#f9aff9"/><rect x="301.6" y="5.0" width="5.7" height="5.4" fill="#fac1fa"/><rect x="306.8" y="5.0" width="5.7" height="5.4" fill="#f9b9f9"/><rect x="312.0" y="5.0" width="5.7" height="5.4" fill="#fac2fa"/><rect x="317.2" y="5.0" width="5.7" height="5.4" fill="#f8a9f8"/><rect x="322.4" y="5.0" width="5.7" height="5.4" fill="#fac2fa"/><rect x="327.6" y="5.0" width="5.7" height="5.4" fill="#fac2fa"/><rect x="332.8" y="5.0" width="5.7" height="5.4" fill="#f8a7f8"/><rect x="338.0" y="5.0" width="5.7" height="5.4" fill="#fac2fa"/><rect x="0.0" y="10.0" width="5.7" height="5.4" fill="#fdeafd"/><rect x="5.2" y="10.0" width="5.7" height="5.4" fill="#fde7fd"/><rect x="10.4" y="10.0" width="5.7" height="5.4" fill="#fef9fe"/><rect x="15.6" y="10.0" width="5.7" height="5.4" fill="#fdeffd"/><rect x="20.8" y="10.0" width="5.7" height="5.4" fill="#fcdffc"/><rect x="26.0" y="10.0" width="5.7" height="5.4" fill="#fcd7fc"/><rect x="31.2" y="10.0" width="5.7" height="5.4" fill="#fdedfd"/><rect x="36.4" y="10.0" width="5.7" height="5.4" fill="#fde8fd"/><rect x="41.6" y="10.0" width="5.7" height="5.4" fill="#fef7fe"/><rect x="46.8" y="10.0" width="5.7" height="5.4" fill="#fde8fd"/><rect x="52.0" y="10.0" width="5.7" height="5.4" fill="#fdecfd"/><rect x="57.2" y="10.0" width="5.7" height="5.4" fill="#fde7fd"/><rect x="62.4" y="10.0" width="5.7" height="5.4" fill="#fdeffd"/><rect x="67.6" y="10.0" width="5.7" height="5.4" fill="#fdeefd"/><rect x="72.8" y="10.0" width="5.7" height="5.4" fill="#fcd9fc"/><rect x="78.0" y="10.0" width="5.7" height="5.4" fill="#fcdefc"/><rect x="83.2" y="10.0" width="5.7" height="5.4" fill="#fdecfd"/><rect x="88.4" y="10.0" width="5.7" height="5.4" fill="#fef7fe"/><rect x="93.6" y="10.0" width="5.7" height="5.4" fill="#fef7fe"/><rect x="98.8" y="10.0" width="5.7" height="5.4" fill="#fef6fe"/><rect x="104.0" y="10.0" width="5.7" height="5.4" fill="#fef5fe"/><rect x="109.2" y="10.0" width="5.7" height="5.4" fill="#fde5fd"/><rect x="114.4" y="10.0" width="5.7" height="5.4" fill="#fde7fd"/><rect x="119.6" y="10.0" width="5.7" height="5.4" fill="#fef5fe"/><rect x="124.8" y="10.0" width="5.7" height="5.4" fill="#fcdafc"/><rect x="130.0" y="10.0" width="5.7" height="5.4" fill="#fce2fc"/><rect x="135.2" y="10.0" width="5.7" height="5.4" fill="#fce0fc"/><rect x="140.4" y="10.0" width="5.7" height="5.4" fill="#fcdafc"/><rect x="145.6" y="10.0" width="5.7" height="5.4" fill="#fdeefd"/><rect x="150.8" y="10.0" width="5.7" height="5.4" fill="#fcd9fc"/><rect x="156.0" y="10.0" width="5.7" height="5.4" fill="#fcd7fc"/><rect x="161.2" y="10.0" width="5.7" height="5.4" fill="#fcd9fc"/><rect x="166.4" y="10.0" width="5.7" height="5.4" fill="#fef7fe"/><rect x="171.6" y="10.0" width="5.7" height="5.4" fill="#fcdbfc"/><rect x="176.8" y="10.0" width="5.7" height="5.4" fill="#fcd7fc"/><rect x="182.0" y="10.0" width="5.7" height="5.4" fill="#fef5fe"/><rect x="187.2" y="10.0" width="5.7" height="5.4" fill="#fcdbfc"/><rect x="192.4" y="10.0" width="5.7" height="5.4" fill="#fcdcfc"/><rect x="197.6" y="10.0" width="5.7" height="5.4" fill="#fef8fe"/><rect x="202.8" y="10.0" width="5.7" height="5.4" fill="#fce0fc"/><rect x="208.0" y="10.0" width="5.7" height="5.4" fill="#fcdefc"/><rect x="213.2" y="10.0" width="5.7" height="5.4" fill="#fcdffc"/><rect x="218.4" y="10.0" width="5.7" height="5.4" fill="#fef7fe"/><rect x="223.6" y="10.0" width="5.7" height="5.4" fill="#fcd7fc"/><rect x="228.8" y="10.0" width="5.7" height="5.4" fill="#fef7fe"/><rect x="234.0" y="10.0" width="5.7" height="5.4" fill="#fef6fe"/><rect x="239.2" y="10.0" width="5.7" height="5.4" fill="#fcd8fc"/><rect x="244.4" y="10.0" width="5.7" height="5.4" fill="#fde8fd"/><rect x="249.6" y="10.0" width="5.7" height="5.4" fill="#fef3fe"/><rect x="254.8" y="10.0" width="5.7" height="5.4" fill="#fdebfd"/><rect x="260.0" y="10.0" width="5.7" height="5.4" fill="#fce3fc"/><rect x="265.2" y="10.0" width="5.7" height="5.4" fill="#fdf0fd"/><rect x="270.4" y="10.0" width="5.7" height="5.4" fill="#fcd9fc"/><rect x="275.6" y="10.0" width="5.7" height="5.4" fill="#fce1fc"/><rect x="280.8" y="10.0" width="5.7" height="5.4" fill="#fdecfd"/><rect x="286.0" y="10.0" width="5.7" height="5.4" fill="#fdecfd"/><rect x="291.2" y="10.0" width="5.7" height="5.4" fill="#fef5fe"/><rect x="296.4" y="10.0" width="5.7" height="5.4" fill="#fcd6fc"/><rect x="301.6" y="10.0" width="5.7" height="5.4" fill="#fdeefd"/><rect x="306.8" y="10.0" width="5.7" height="5.4" fill="#fcd8fc"/><rect x="312.0" y="10.0" width="5.7" height="5.4" fill="#fde6fd"/><rect x="317.2" y="10.0" width="5.7" height="5.4" fill="#fde6fd"/><rect x="322.4" y="10.0" width="5.7" height="5.4" fill="#fef3fe"/><rect x="327.6" y="10.0" width="5.7" height="5.4" fill="#fde7fd"/><rect x="332.8" y="10.0" width="5.7" height="5.4" fill="#fef6fe"/><rect x="338.0" y="10.0" width="5.7" height="5.4" fill="#fde9fd"/></svg>
<svg class="a" style="left:325px;top:500px" width="75" height="10" shape-rendering="crispEdges"><rect x="0.0" y="0.0" width="5.7" height="5.4" fill="#f8acf8"/><rect x="5.2" y="0.0" width="5.7" height="5.4" fill="#fac6fa"/><rect x="10.4" y="0.0" width="5.7" height="5.4" fill="#fac6fa"/><rect x="15.6" y="0.0" width="5.7" height="5.4" fill="#f9b3f9"/><rect x="20.8" y="0.0" width="5.7" height="5.4" fill="#fbcdfb"/><rect x="26.0" y="0.0" width="5.7" height="5.4" fill="#f8abf8"/><rect x="31.2" y="0.0" width="5.7" height="5.4" fill="#f8abf8"/><rect x="36.4" y="0.0" width="5.7" height="5.4" fill="#fbcdfb"/><rect x="41.6" y="0.0" width="5.7" height="5.4" fill="#f9aff9"/><rect x="46.8" y="0.0" width="5.7" height="5.4" fill="#f9b7f9"/><rect x="52.0" y="0.0" width="5.7" height="5.4" fill="#f9b1f9"/><rect x="57.2" y="0.0" width="5.7" height="5.4" fill="#f8a2f8"/><rect x="62.4" y="0.0" width="5.7" height="5.4" fill="#f8a1f8"/><rect x="67.6" y="0.0" width="5.7" height="5.4" fill="#fabcfa"/><rect x="72.8" y="0.0" width="5.7" height="5.4" fill="#f8a7f8"/><rect x="0.0" y="5.0" width="5.7" height="5.4" fill="#fcdefc"/><rect x="5.2" y="5.0" width="5.7" height="5.4" fill="#fcd7fc"/><rect x="10.4" y="5.0" width="5.7" height="5.4" fill="#fef8fe"/><rect x="15.6" y="5.0" width="5.7" height="5.4" fill="#fcd8fc"/><rect x="20.8" y="5.0" width="5.7" height="5.4" fill="#fef1fe"/><rect x="26.0" y="5.0" width="5.7" height="5.4" fill="#fef5fe"/><rect x="31.2" y="5.0" width="5.7" height="5.4" fill="#fde4fd"/><rect x="36.4" y="5.0" width="5.7" height="5.4" fill="#fcdcfc"/><rect x="41.6" y="5.0" width="5.7" height="5.4" fill="#fcd8fc"/><rect x="46.8" y="5.0" width="5.7" height="5.4" fill="#fdecfd"/><rect x="52.0" y="5.0" width="5.7" height="5.4" fill="#fcdcfc"/><rect x="57.2" y="5.0" width="5.7" height="5.4" fill="#fef8fe"/><rect x="62.4" y="5.0" width="5.7" height="5.4" fill="#fcd7fc"/><rect x="67.6" y="5.0" width="5.7" height="5.4" fill="#fdeffd"/><rect x="72.8" y="5.0" width="5.7" height="5.4" fill="#fde6fd"/></svg>
<div class="cl" style="top:100.00px"><span class="k">Dim</span> result</div>
<div class="cl" style="top:114.77px"><span class="k">Dim</span> client</div>
<div class="cl" style="top:129.54px"><span class="k">SET</span> client = <span class="n">CreateObject</span>(<span class="s">&quot;ZeusAPI.Client&quot;</span>)</div>
<div class="cl" style="top:159.08px"><span class="k">Dim</span> IP</div>
<div class="cl" style="top:173.85px"><span class="k">Dim</span> Port</div>
<div class="cl" style="top:188.62px"><span class="k">Dim</span> UseSSL</div>
<div class="cl" style="top:203.39px"><span class="k">Dim</span> AuthAccount</div>
<div class="cl" style="top:218.16px"><span class="k">Dim</span> Password</div>
<div class="cl" style="top:232.93px"><span class="k">Dim</span> AuthPass</div>
<div class="cl" style="top:247.70px"><span class="k">Dim</span> MyLastKnowValues</div>
<div class="cl" style="top:262.47px"><span class="k">Dim</span> Tagwriter</div>
<div class="cl" style="top:292.01px">IP = </div>
<div class="cl" style="top:306.78px">Port = </div>
<div class="cl" style="top:321.55px">UseSSL = </div>
<div class="cl" style="top:336.32px">AuthAccount = </div>
<div class="cl" style="top:351.09px">Password = </div>
<div class="cl" style="top:365.86px">AuthPass = </div>
<div class="cl" style="top:395.40px">client.Create IP, Port, UseSSL, AuthAccount, Password, AuthPass</div>
<div class="cl" style="top:424.94px"><span class="k">If</span> client.IsCreated() = <span class="b">True</span> <span class="k">Then</span></div>
<div class="cl" style="top:454.48px">    <span class="n">MsgBox</span> <span class="s">&quot;Client created&quot;</span></div>
<div class="cl" style="top:484.02px">    <span class="k">Dim</span> stationID</div>
<div class="cl" style="top:498.79px">    stationID = </div>
<div class="cl" style="top:513.56px">    <span class="k">Set</span> myLastKnowValues = client.GetLastKnownValues(stationID)</div>
<div class="cl" style="top:528.33px">    <span class="k">Set</span> tagwriter = HMIRuntime.Tags(<span class="s">&quot;Test&quot;</span>)</div>
<div class="cl" style="top:543.10px">    tagwriter.write myLastKnowValues.values.Item(<span class="s">&quot;2&quot;</span>)</div>
<div class="cl" style="top:557.87px">    <span class="k">If</span> myLastKnowValues = <span class="b">null</span> <span class="k">Then</span></div>
<div class="cl" style="top:572.64px">        <span class="n">MsgBox</span>(client.GetZeusApiLastError())</div>
<div class="cl" style="top:587.41px">    <span class="k">Else</span></div>
<div class="cl" style="top:602.18px">        <span class="k">Dim</span> myMessage</div>
<div class="cl" style="top:616.95px">        myMessage = <span class="s">&quot;Last Connection Time: &quot;</span> &amp; myLastKnowValues.lastConnectionTime &amp; vbCrLf</div>
<div class="cl" style="top:631.72px">        myMessage = myMessage &amp; <span class="s">&quot;RSSI: &quot;</span> &amp; myLastKnowValues.lastConnectionTime &amp; vbCrLf</div>
<div class="cl" style="top:646.49px">        myMessage = myMessage &amp; <span class="s">&quot;PowerSupply: &quot;</span> &amp; myLastKnowValues.PowerSupply &amp; vbCrLf</div>
<div class="cl" style="top:661.26px">        myMessage = myMessage &amp; <span class="s">&quot;Values[2]: &quot;</span> &amp; myLastKnowValues.values.Item(<span class="s">&quot;2&quot;</span>) &amp; vbCrLf</div>
<div class="cl" style="top:690.80px">        <span class="n">MsgBox</span> myMessage</div>
<div class="cl" style="top:705.57px">    <span class="k">End If</span></div>
<div class="cl" style="top:720.34px"><span class="k">Else</span></div>
</body></html>
